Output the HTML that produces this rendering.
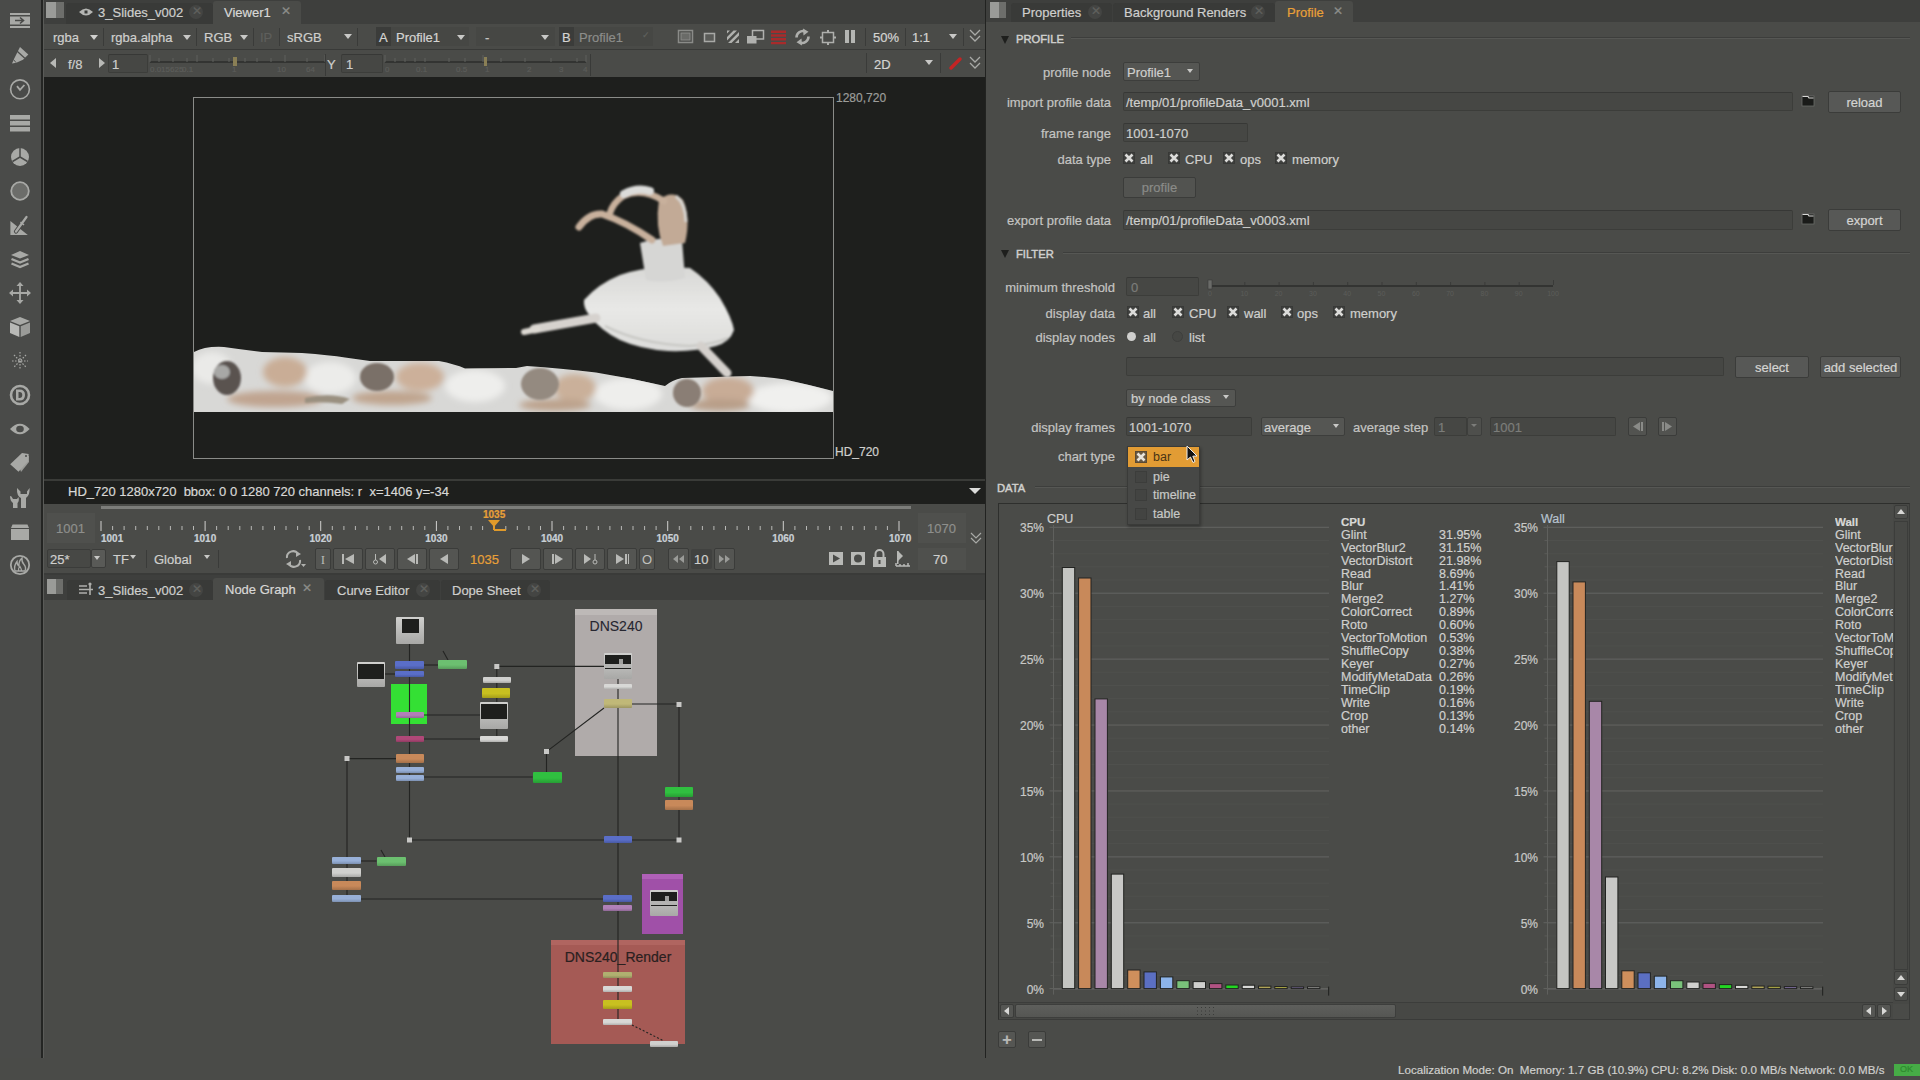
<!DOCTYPE html>
<html><head><meta charset="utf-8">
<style>
*{box-sizing:border-box;margin:0;padding:0}
html,body{width:1920px;height:1080px;overflow:hidden;background:#4a4b48;font-family:"Liberation Sans",sans-serif;font-size:13px;color:#c8c8c6}
.a{position:absolute}
.tx{position:absolute;white-space:pre;line-height:1;-webkit-text-stroke:0.2px currentColor}
.sep{position:absolute;width:1px;background:#3a3b39}
.fld{position:absolute;background:#464744;border:1px solid #3c3d3a;border-top-color:#373836;border-radius:2px}
.btn{position:absolute;background:#575856;border:1px solid #3b3c3a;border-radius:2px}
.dd{position:absolute;background:#555653;border:1px solid #3d3e3c;border-radius:2px}
.arr{position:absolute;width:0;height:0;border-left:4px solid transparent;border-right:4px solid transparent;border-top:5px solid #c8c8c6}
.cb{position:absolute;width:12px;height:12px;background:#3f403e;border:1px solid #383937}
.nd{position:absolute;border-radius:1px}
</style></head><body>

<!-- LEFT TOOLBAR -->
<div class="a" style="left:0;top:0;width:41px;height:1058px;background:#4a4b49"></div>
<div class="a" style="left:41px;top:0;width:2px;height:1058px;background:#242523"></div>
<svg class="a" style="left:0;top:0" width="41" height="600" viewBox="0 0 41 600">
 <g fill="#a8a9a6">
  <!-- 1 box arrow -->
  <rect x="10" y="13" width="20" height="2"/><rect x="10" y="26" width="20" height="2"/>
  <rect x="10" y="16.5" width="20" height="8"/>
  <path d="M15 20.5h8 M20 17.5l3.5 3-3.5 3" stroke="#4a4b49" stroke-width="1.6" fill="none"/>
  <!-- 2 pencil -->
  <path d="M14 59 L20 47 L28.3 54.6 L23 59.8 L16.3 62.8 L12 63.5Z"/>
  <path d="M17.2 51.2 L24.8 58.2" stroke="#4a4b49" stroke-width="1.2"/>
  <path d="M13.5 59.5 L16 62.6" stroke="#4a4b49" stroke-width="0.9"/>
  <!-- 3 clock -->
  <circle cx="20" cy="89.3" r="9.4" fill="none" stroke="#a8a9a6" stroke-width="1.6"/>
  <path d="M17 86.2 L20 89.8 L24.4 85" stroke="#a8a9a6" stroke-width="1.8" fill="none"/>
  <!-- 4 stacked bars -->
  <rect x="10" y="115" width="20" height="4.5"/><rect x="10" y="121" width="20" height="4.5"/><rect x="10" y="127" width="20" height="4.5"/>
  <!-- 5 pie -->
  <circle cx="20" cy="157" r="9"/>
  <path d="M20 157 V148 M20 157 L12.5 161.5 M20 157 L27.5 161.5" stroke="#4a4b49" stroke-width="1.5"/>
  <!-- 6 circle -->
  <circle cx="20" cy="191" r="8.8" fill="#6c6d6a" stroke="#a8a9a6" stroke-width="1.8"/>
  <!-- 7 triangle+pen -->
  <path d="M10.4 221 V235 H27.8Z"/>
  <path d="M16 231.5 L26.5 217" stroke="#4a4b49" stroke-width="4.2" stroke-linecap="round"/>
  <path d="M16 231.5 L26.5 217" stroke="#a8a9a6" stroke-width="2.2" stroke-linecap="round"/>
  <path d="M20.5 222 L24 225" stroke="#a8a9a6" stroke-width="1.6"/>
  <!-- 8 layers -->
  <path d="M11 255 L20 251 L29 255 L20 258.5Z"/>
  <path d="M11.5 259 L20 262.5 L28.5 259" stroke="#a8a9a6" stroke-width="2.4" fill="none"/>
  <path d="M11.5 263.5 L20 267 L28.5 263.5" stroke="#a8a9a6" stroke-width="2.4" fill="none"/>
  <!-- 9 move -->
  <path d="M20 283 V303 M10 293 H30" stroke="#a8a9a6" stroke-width="1.8"/>
  <path d="M20 282 L16.5 286 H23.5Z M20 304 L16.5 300 H23.5Z M9 293 L13 289.5 V296.5Z M31 293 L27 289.5 V296.5Z"/>
  <!-- 10 cube -->
  <path d="M10 321 L20 317 L30 321 L20 325Z"/><path d="M10 322.5 L19.3 326.3 V337 L10 333Z" fill="#b8b9b6"/><path d="M20.7 326.3 L30 322.5 V333 L20.7 337Z" fill="#9a9b98"/>
  <!-- 11 particles -->
  <path d="M20 352 V370 M12 361 H28 M14 355 L26 367 M26 355 L14 367" stroke="#a8a9a6" stroke-width="1.2" stroke-dasharray="1.6 1.4"/>
  <!-- 12 D circle -->
  <circle cx="20" cy="395" r="9" fill="none" stroke="#a8a9a6" stroke-width="2.6"/>
  <path d="M16 389.5 H19.5 Q25 389.5 25 395 Q25 400.5 19.5 400.5 H16Z M18.5 392 V398 H19.5 Q22.3 398 22.3 395 Q22.3 392 19.5 392Z" fill="#a8a9a6" fill-rule="evenodd"/>
  <!-- 13 eye -->
  <path d="M10 429 Q20 418.5 29.6 429 Q20 439.5 10 429Z"/><ellipse cx="20" cy="429" rx="3.8" ry="3.2" fill="#4a4b49"/>
  <!-- 14 tags -->
  <path d="M21 472 L29 462 V456 L27 455 L19 466Z" fill="#9a9b98"/>
  <path d="M10.2 464.3 L22 453 L28.7 454 L27.8 461.5 L18.5 471.7Z"/><circle cx="26" cy="456" r="1" fill="#4a4b49"/>
  <!-- 15 wrenches -->
  <path d="M10 496 Q10 501 13 503 V508 H17.5 V503 Q19.5 501 18.5 497 L17 499 H13 L11.5 496.5Z"/>
  <path d="M17 488 Q16.5 496 21 498 V508 H26 V498 Q30 495.5 29.6 488 L27 491.5 V494 H20.5 V491.5Z"/>
  <!-- 16 drawer -->
  <path d="M12.5 524.5 H27.5 L29 528 H11Z"/><rect x="11" y="529" width="18" height="11"/>
  <!-- 17 fire circle -->
  <circle cx="20" cy="565" r="9.2" fill="none" stroke="#a8a9a6" stroke-width="1.8"/>
  <path d="M15 571 Q13.5 566 17 561.5 Q17 565 19 566 Q18.5 561 22 558 Q21.5 562 24 564.5 Q26.5 567.5 25 571Z" fill="none" stroke="#a8a9a6" stroke-width="1.4"/>
  <path d="M18.5 571 Q18 568 20 566.5 Q21.5 569 21.5 571" fill="none" stroke="#a8a9a6" stroke-width="1.2"/>
 </g>
</svg>

<div class="a" style="left:43px;top:0;width:1px;height:1058px;background:#5a5b58"></div>

<!-- VIEWER PANE -->
<!-- VIEWER TAB BAR -->
<div class="a" style="left:44px;top:0;width:941px;height:24px;background:#3e3f3d"></div>
<div class="a" style="left:46px;top:2px;width:18px;height:16px;background:linear-gradient(90deg,#9a9b98 0 55%,#6d6e6b 55% 100%)"></div>
<div class="a" style="left:66px;top:3px;width:147px;height:21px;background:#393a38;border-radius:3px 3px 0 0"></div>
<svg class="a" style="left:78px;top:6px" width="16" height="12" viewBox="0 0 16 12"><path d="M1 6 Q8 -1 15 6 Q8 13 1 6Z" fill="#b5b6b3"/><rect x="6.5" y="4.5" width="3" height="3" fill="#393a38"/></svg>
<div class="tx" style="left:98px;top:6px;font-size:13px;color:#cfcfcd">3_Slides_v002</div>
<div class="a" style="left:189px;top:5px;width:14px;height:14px;border-radius:7px;background:#444543"></div>
<div class="tx" style="left:192px;top:5px;font-size:12px;color:#5f605d">✕</div>
<div class="a" style="left:213px;top:1px;width:88px;height:23px;background:#4a4b48;border-radius:3px 3px 0 0"></div>
<div class="tx" style="left:224px;top:6px;font-size:13px;color:#d8d8d6">Viewer1</div>
<div class="tx" style="left:281px;top:5px;font-size:12px;color:#8c8d8a">✕</div>

<!-- VIEWER ROW 1 -->
<div class="a" style="left:44px;top:24px;width:941px;height:26px;background:#4a4b48"></div>
<div class="a" style="left:44px;top:49px;width:941px;height:1px;background:#393a38"></div>
<div class="tx" style="left:53px;top:31px;color:#cfcfcd">rgba</div><div class="arr" style="left:90px;top:35px;border-top-color:#d0d0ce"></div>
<div class="sep" style="left:103px;top:28px;height:18px"></div>
<div class="tx" style="left:111px;top:31px;color:#cfcfcd">rgba.alpha</div><div class="arr" style="left:183px;top:35px"></div>
<div class="sep" style="left:196px;top:28px;height:18px"></div>
<div class="tx" style="left:204px;top:31px;color:#cfcfcd">RGB</div><div class="arr" style="left:240px;top:35px"></div>
<div class="sep" style="left:253px;top:28px;height:18px"></div>
<div class="tx" style="left:260px;top:31px;color:#5e5f5c">IP</div>
<div class="sep" style="left:279px;top:28px;height:18px"></div>
<div class="tx" style="left:287px;top:31px;color:#cfcfcd">sRGB</div><div class="arr" style="left:344px;top:34px"></div>
<div class="sep" style="left:357px;top:28px;height:18px"></div>
<div class="a" style="left:376px;top:27px;width:93px;height:19px;background:#464744"></div>
<div class="a" style="left:376px;top:27px;width:15px;height:19px;background:#3b3c3a"></div>
<div class="tx" style="left:379px;top:31px;color:#d4d4d2">A</div>
<div class="tx" style="left:396px;top:31px;color:#d4d4d2">Profile1</div><div class="arr" style="left:457px;top:35px"></div>
<div class="a" style="left:476px;top:27px;width:79px;height:19px;background:#464744"></div>
<div class="tx" style="left:485px;top:31px;color:#c8c8c6">-</div><div class="arr" style="left:541px;top:35px"></div>
<div class="a" style="left:559px;top:27px;width:94px;height:19px;background:#464744"></div>
<div class="a" style="left:559px;top:27px;width:15px;height:19px;background:#3b3c3a"></div>
<div class="tx" style="left:562px;top:31px;color:#d4d4d2">B</div>
<div class="tx" style="left:579px;top:31px;color:#8c8d8a">Profile1</div>
<div class="tx" style="left:642px;top:31px;font-size:9px;color:#5f605d">✓</div>
<!-- row1 icons -->
<svg class="a" style="left:676px;top:28px" width="190" height="18" viewBox="0 0 190 18">
 <rect x="2.5" y="2.5" width="14" height="12" fill="none" stroke="#8a8b88" stroke-width="1.5"/><rect x="5" y="5" width="9" height="7" fill="#6a6b68" stroke="#8a8b88" stroke-width="1"/>
 <rect x="28.5" y="5.5" width="10" height="8" fill="#5a5b58" stroke="#a8a9a6" stroke-width="1.5"/>
 <path d="M51 2.5 H54 L51 5.5Z M51 9 L57.5 2.5 H61 L51 12.5Z M52 15 L63 4 V7.5 L55.5 15Z M59 15 L63 11 V15Z" fill="#b0b1ae"/>
 <rect x="76.5" y="2.5" width="11" height="8.5" fill="none" stroke="#b0b1ae" stroke-width="1.5"/><rect x="71" y="8" width="9.5" height="7.5" fill="#b0b1ae"/>
 <path d="M95 2.5h15v2.4H95z M95 6.3h15v2.4H95z M95 10.1h15v2.4H95z M95 13.9h15v2.4H95z" fill="#a82b2b"/>
 <g transform="translate(-5 0)"><path d="M125.5 9.5 A6.5 6.5 0 0 1 134 3.3" stroke="#aeafac" stroke-width="2.6" fill="none"/><path d="M132 0.5 L137.5 3.8 L132.5 7.5Z" fill="#aeafac"/>
 <path d="M137.5 8.5 A6.5 6.5 0 0 1 129 14.7" stroke="#aeafac" stroke-width="2.6" fill="none"/><path d="M131 17.5 L125.5 14.2 L130.5 10.5Z" fill="#aeafac"/></g>
 <rect x="146.5" y="4.5" width="11" height="10" fill="none" stroke="#aeafac" stroke-width="1.5"/><rect x="151" y="2" width="2" height="2" fill="#aeafac"/><rect x="151" y="15" width="2" height="2" fill="#aeafac"/><rect x="144" y="8.5" width="2" height="2" fill="#aeafac"/><rect x="158" y="8.5" width="2" height="2" fill="#aeafac"/>
 <rect x="169" y="2" width="4" height="13" fill="#b5b6b3"/><rect x="175" y="2" width="4" height="13" fill="#b5b6b3"/>
</svg>
<div class="sep" style="left:865px;top:28px;height:18px"></div>
<div class="tx" style="left:873px;top:31px;color:#d4d4d2">50%</div>
<div class="sep" style="left:905px;top:28px;height:18px"></div>
<div class="tx" style="left:912px;top:31px;color:#d4d4d2">1:1</div><div class="arr" style="left:949px;top:34px"></div>
<div class="sep" style="left:963px;top:28px;height:18px"></div>
<svg class="a" style="left:969px;top:29px" width="12" height="14" viewBox="0 0 12 14"><path d="M1 1 L6 6 L11 1 M1 7 L6 12 L11 7" stroke="#a9aaa7" stroke-width="1.3" fill="none"/></svg>

<!-- VIEWER ROW 2 -->
<div class="a" style="left:44px;top:50px;width:941px;height:27px;background:#4a4b48"></div>
<div class="a" style="left:50px;top:58px;width:0;height:0;border-top:5px solid transparent;border-bottom:5px solid transparent;border-right:6px solid #b8b9b6"></div>
<div class="tx" style="left:68px;top:58px;color:#cfcfcd">f/8</div>
<div class="a" style="left:99px;top:58px;width:0;height:0;border-top:5px solid transparent;border-bottom:5px solid transparent;border-left:6px solid #b8b9b6"></div>
<div class="fld" style="left:108px;top:54px;width:40px;height:19px;background:#464744"></div>
<div class="tx" style="left:112px;top:58px;color:#cfcfcd">1</div>
<svg class="a" style="left:149px;top:51px" width="445" height="26" viewBox="0 0 445 26">
 <rect x="1" y="10" width="176" height="2" fill="#333432"/>
 <path d="M1 4v7 M10 7v4 M24 7v4 M38 7v4 M48 4v7 M64 7v4 M80 7v4 M96 7v4 M108 7v4 M122 7v4 M136 4v7 M158 7v4 M176 4v7" stroke="#5f605d" stroke-width="1"/>
 <rect x="84" y="6" width="4" height="9" fill="#8a7f55"/>
 <rect x="176" y="3" width="1" height="22" fill="#393a38"/>
 <rect x="236" y="10" width="201" height="2" fill="#333432"/>
 <path d="M236 4v7 M246 7v4 M256 7v4 M266 7v4 M276 7v4 M300 7v4 M316 7v4 M334 4v7 M352 7v4 M376 7v4 M402 7v4 M428 7v4 M437 4v7" stroke="#5f605d" stroke-width="1"/>
 <rect x="335" y="6" width="3" height="9" fill="#8a7f55"/>
 <rect x="441" y="3" width="1" height="22" fill="#393a38"/>
</svg>
<div class="tx" style="left:150px;top:66px;font-size:8px;color:#5c5d5a">0.015625</div><div class="tx" style="left:182px;top:66px;font-size:8px;color:#5c5d5a">0.1</div><div class="tx" style="left:232px;top:66px;font-size:8px;color:#5c5d5a">1</div><div class="tx" style="left:277px;top:66px;font-size:8px;color:#5c5d5a">10</div><div class="tx" style="left:306px;top:66px;font-size:8px;color:#5c5d5a">64</div><div class="tx" style="left:385px;top:66px;font-size:8px;color:#5c5d5a">0</div><div class="tx" style="left:416px;top:66px;font-size:8px;color:#5c5d5a">0.1</div><div class="tx" style="left:456px;top:66px;font-size:8px;color:#5c5d5a">0.5</div><div class="tx" style="left:485px;top:66px;font-size:8px;color:#5c5d5a">1</div><div class="tx" style="left:527px;top:66px;font-size:8px;color:#5c5d5a">2</div><div class="tx" style="left:559px;top:66px;font-size:8px;color:#5c5d5a">3</div><div class="tx" style="left:583px;top:66px;font-size:8px;color:#5c5d5a">4</div><div class="tx" style="left:327px;top:58px;color:#cfcfcd">Y</div>
<div class="fld" style="left:341px;top:54px;width:42px;height:19px;background:#464744"></div>
<div class="tx" style="left:346px;top:58px;color:#cfcfcd">1</div>
<div class="sep" style="left:866px;top:53px;height:20px"></div>
<div class="tx" style="left:874px;top:58px;color:#d4d4d2">2D</div><div class="arr" style="left:925px;top:60px"></div>
<div class="sep" style="left:940px;top:53px;height:20px"></div>
<svg class="a" style="left:948px;top:55px" width="16" height="16" viewBox="0 0 16 16"><path d="M3 13 L12 4" stroke="#c42424" stroke-width="3.5" stroke-linecap="round"/></svg>
<svg class="a" style="left:969px;top:56px" width="12" height="14" viewBox="0 0 12 14"><path d="M1 1 L6 6 L11 1 M1 7 L6 12 L11 7" stroke="#a9aaa7" stroke-width="1.3" fill="none"/></svg>

<!-- VIEWER IMAGE AREA -->
<div class="a" style="left:44px;top:77px;width:941px;height:403px;background:#1e1f1d"></div>
<div class="a" style="left:193px;top:97px;width:641px;height:362px;border:1px solid #8a8b88"></div>
<div class="tx" style="left:836px;top:92px;font-size:12px;color:#9c9d9a">1280,720</div>
<div class="tx" style="left:835px;top:446px;font-size:12px;color:#d0d0ce">HD_720</div>
<!-- IMAGE -->
<svg class="a" style="left:194px;top:98px" width="639" height="360" viewBox="194 98 639 360">
 <defs>
  <filter id="bl" x="-5%" y="-5%" width="110%" height="110%"><feGaussianBlur stdDeviation="0.9"/></filter>
  <filter id="bl2" x="-10%" y="-10%" width="120%" height="120%"><feGaussianBlur stdDeviation="3"/></filter>
  <clipPath id="fr"><path d="M194 352 Q205 346 224 347 Q245 350 262 352 L302 353 Q330 355 345 357.5 L370 361 L439 361 Q455 364 465 368.5 L516 368 L527 366 Q560 368 596 372.5 Q630 378 665 386 Q672 380 682 378 L750 376 Q770 377 785 379.5 Q810 385 833 391 V412 H194Z"/></clipPath>
  <linearGradient id="tut" x1="0" y1="0" x2="0" y2="1"><stop offset="0" stop-color="#d8d8d6"/><stop offset="0.5" stop-color="#e8e8e6"/><stop offset="1" stop-color="#dcdcda"/></linearGradient>
 </defs>
 <g clip-path="url(#fr)">
  <rect x="194" y="340" width="639" height="72" fill="#d8d8d6"/>
  <g filter="url(#bl2)">
   <ellipse cx="212" cy="368" rx="20" ry="16" fill="#eaeae8"/>
   <ellipse cx="330" cy="378" rx="26" ry="16" fill="#ececea"/>
   <ellipse cx="475" cy="386" rx="30" ry="16" fill="#eeeeec"/>
   <ellipse cx="628" cy="394" rx="34" ry="16" fill="#eeeeec"/>
   <ellipse cx="790" cy="398" rx="42" ry="15" fill="#f0f0ee"/>
   <ellipse cx="285" cy="372" rx="22" ry="15" fill="#c9ad96"/>
   <ellipse cx="275" cy="399" rx="48" ry="8" fill="#c0a490"/>
   <ellipse cx="420" cy="377" rx="24" ry="14" fill="#ccb09a"/>
   <ellipse cx="392" cy="398" rx="40" ry="7" fill="#bfa48e"/>
   <ellipse cx="575" cy="388" rx="21" ry="14" fill="#cab09a"/>
   <ellipse cx="555" cy="405" rx="36" ry="6" fill="#bca28c"/>
   <ellipse cx="728" cy="391" rx="26" ry="14" fill="#c8ac96"/>
   <ellipse cx="720" cy="405" rx="30" ry="6" fill="#b89e88"/>
  </g>
  <g filter="url(#bl)">
   <ellipse cx="227" cy="378" rx="14" ry="17" fill="#5a5250"/>
   <ellipse cx="222" cy="372" rx="8" ry="7" fill="#a8a8a6"/>
   <ellipse cx="377" cy="377" rx="17" ry="14" fill="#7a7068"/>
   <ellipse cx="540" cy="384" rx="19" ry="16" fill="#948a80"/>
   <ellipse cx="687" cy="393" rx="14" ry="14" fill="#8a7e74"/>
   <path d="M305 398 Q330 392 350 399 L342 404 Q322 401 305 403Z" fill="#9a9080"/>
  </g>
 </g>
 <!-- main dancer -->
 <g filter="url(#bl)">
  <path d="M584 300 Q598 284 620 275 Q640 268 665 267 L690 268 Q708 280 720 298 Q732 318 734 330 Q730 342 716 346 Q695 352 668 351 Q640 349 620 340 Q600 330 590 316 Q583 308 584 300Z" fill="url(#tut)"/>
  <path d="M605 326 Q640 344 690 346 Q715 344 728 338" stroke="#c6c6c2" stroke-width="2" fill="none"/>
  <path d="M640 243 Q662 236 682 240 L685 278 Q664 284 646 280Z" fill="#d6d6d4"/>
  <path d="M596 318 L534 329" stroke="#d6d2ce" stroke-width="9" stroke-linecap="round"/>
  <path d="M538 329 L524 332" stroke="#dcd8d2" stroke-width="6" stroke-linecap="round"/>
  <path d="M701 346 L727 373" stroke="#d4d0cc" stroke-width="9" stroke-linecap="round"/>
  <path d="M659 200 Q672 189 683 200 Q691 218 685 243 L663 246 Q655 226 659 200Z" fill="#c2aa96"/>
  <path d="M676 196 Q686 204 686 222" stroke="#d6d4d0" stroke-width="3" fill="none"/>
  <path d="M652 240 Q626 222 602 214 Q589 213 579 227" stroke="#c8b09c" stroke-width="7" fill="none" stroke-linecap="round"/>
  <path d="M664 201 Q642 187 623 196 Q613 203 610 213" stroke="#c8b09c" stroke-width="6.5" fill="none" stroke-linecap="round"/>
  <path d="M624 194 Q637 187 650 191" stroke="#dcdcda" stroke-width="8" fill="none" stroke-linecap="round"/>
 </g>
</svg>

<!-- INFO BAR -->
<div class="a" style="left:44px;top:479px;width:941px;height:2px;background:#3a3b38"></div>
<div class="a" style="left:44px;top:481px;width:941px;height:23px;background:#1e1f1d"></div>
<div class="tx" style="left:68px;top:485px;font-size:13px;color:#d8d8d6">HD_720 1280x720  bbox: 0 0 1280 720 channels: r  x=1406 y=-34</div>
<div class="a" style="left:969px;top:488px;width:0;height:0;border-left:6px solid transparent;border-right:6px solid transparent;border-top:6px solid #dcdcda"></div>




<!-- TIMELINE -->
<div class="a" style="left:44px;top:505px;width:941px;height:68px;background:#4a4b48"></div>
<div class="a" style="left:101px;top:506px;width:810px;height:3px;background:#7c7d7a"></div>
<div class="a" style="left:47px;top:513px;width:48px;height:30px;background:#4f504d"></div>
<div class="tx" style="left:56px;top:522px;font-size:13px;color:#8e8f8c">1001</div>
<div class="a" style="left:918px;top:513px;width:48px;height:30px;background:#4f504d"></div>
<div class="tx" style="left:927px;top:522px;font-size:13px;color:#8e8f8c">1070</div>
<svg class="a" style="left:0;top:0;pointer-events:none" width="985" height="545" viewBox="0 0 985 545"><rect x="100.5" y="521" width="1" height="10" fill="#d0d0ce"/><rect x="112.1" y="526" width="1" height="4" fill="#b8b9b6"/><rect x="123.6" y="526" width="1" height="4" fill="#b8b9b6"/><rect x="135.2" y="526" width="1" height="4" fill="#b8b9b6"/><rect x="146.8" y="526" width="1" height="4" fill="#b8b9b6"/><rect x="158.3" y="526" width="1" height="4" fill="#b8b9b6"/><rect x="169.9" y="526" width="1" height="4" fill="#b8b9b6"/><rect x="181.5" y="526" width="1" height="4" fill="#b8b9b6"/><rect x="193.0" y="526" width="1" height="4" fill="#b8b9b6"/><rect x="204.6" y="521" width="1" height="10" fill="#d0d0ce"/><rect x="216.1" y="526" width="1" height="4" fill="#b8b9b6"/><rect x="227.7" y="526" width="1" height="4" fill="#b8b9b6"/><rect x="239.3" y="526" width="1" height="4" fill="#b8b9b6"/><rect x="250.8" y="526" width="1" height="4" fill="#b8b9b6"/><rect x="262.4" y="526" width="1" height="4" fill="#b8b9b6"/><rect x="274.0" y="526" width="1" height="4" fill="#b8b9b6"/><rect x="285.5" y="526" width="1" height="4" fill="#b8b9b6"/><rect x="297.1" y="526" width="1" height="4" fill="#b8b9b6"/><rect x="308.7" y="526" width="1" height="4" fill="#b8b9b6"/><rect x="320.2" y="521" width="1" height="10" fill="#d0d0ce"/><rect x="331.8" y="526" width="1" height="4" fill="#b8b9b6"/><rect x="343.4" y="526" width="1" height="4" fill="#b8b9b6"/><rect x="354.9" y="526" width="1" height="4" fill="#b8b9b6"/><rect x="366.5" y="526" width="1" height="4" fill="#b8b9b6"/><rect x="378.1" y="526" width="1" height="4" fill="#b8b9b6"/><rect x="389.6" y="526" width="1" height="4" fill="#b8b9b6"/><rect x="401.2" y="526" width="1" height="4" fill="#b8b9b6"/><rect x="412.8" y="526" width="1" height="4" fill="#b8b9b6"/><rect x="424.3" y="526" width="1" height="4" fill="#b8b9b6"/><rect x="435.9" y="521" width="1" height="10" fill="#d0d0ce"/><rect x="447.4" y="526" width="1" height="4" fill="#b8b9b6"/><rect x="459.0" y="526" width="1" height="4" fill="#b8b9b6"/><rect x="470.6" y="526" width="1" height="4" fill="#b8b9b6"/><rect x="482.1" y="526" width="1" height="4" fill="#b8b9b6"/><rect x="493.7" y="526" width="1" height="4" fill="#b8b9b6"/><rect x="505.3" y="526" width="1" height="4" fill="#b8b9b6"/><rect x="516.8" y="526" width="1" height="4" fill="#b8b9b6"/><rect x="528.4" y="526" width="1" height="4" fill="#b8b9b6"/><rect x="540.0" y="526" width="1" height="4" fill="#b8b9b6"/><rect x="551.5" y="521" width="1" height="10" fill="#d0d0ce"/><rect x="563.1" y="526" width="1" height="4" fill="#b8b9b6"/><rect x="574.7" y="526" width="1" height="4" fill="#b8b9b6"/><rect x="586.2" y="526" width="1" height="4" fill="#b8b9b6"/><rect x="597.8" y="526" width="1" height="4" fill="#b8b9b6"/><rect x="609.4" y="526" width="1" height="4" fill="#b8b9b6"/><rect x="620.9" y="526" width="1" height="4" fill="#b8b9b6"/><rect x="632.5" y="526" width="1" height="4" fill="#b8b9b6"/><rect x="644.1" y="526" width="1" height="4" fill="#b8b9b6"/><rect x="655.6" y="526" width="1" height="4" fill="#b8b9b6"/><rect x="667.2" y="521" width="1" height="10" fill="#d0d0ce"/><rect x="678.8" y="526" width="1" height="4" fill="#b8b9b6"/><rect x="690.3" y="526" width="1" height="4" fill="#b8b9b6"/><rect x="701.9" y="526" width="1" height="4" fill="#b8b9b6"/><rect x="713.4" y="526" width="1" height="4" fill="#b8b9b6"/><rect x="725.0" y="526" width="1" height="4" fill="#b8b9b6"/><rect x="736.6" y="526" width="1" height="4" fill="#b8b9b6"/><rect x="748.1" y="526" width="1" height="4" fill="#b8b9b6"/><rect x="759.7" y="526" width="1" height="4" fill="#b8b9b6"/><rect x="771.3" y="526" width="1" height="4" fill="#b8b9b6"/><rect x="782.8" y="521" width="1" height="10" fill="#d0d0ce"/><rect x="794.4" y="526" width="1" height="4" fill="#b8b9b6"/><rect x="806.0" y="526" width="1" height="4" fill="#b8b9b6"/><rect x="817.5" y="526" width="1" height="4" fill="#b8b9b6"/><rect x="829.1" y="526" width="1" height="4" fill="#b8b9b6"/><rect x="840.7" y="526" width="1" height="4" fill="#b8b9b6"/><rect x="852.2" y="526" width="1" height="4" fill="#b8b9b6"/><rect x="863.8" y="526" width="1" height="4" fill="#b8b9b6"/><rect x="875.4" y="526" width="1" height="4" fill="#b8b9b6"/><rect x="886.9" y="526" width="1" height="4" fill="#b8b9b6"/><rect x="898.5" y="521" width="1" height="10" fill="#d0d0ce"/>
 <path d="M488 520 H500 L494 527Z" fill="#e09a2a"/><rect x="493" y="520" width="2" height="10" fill="#e09a2a"/><rect x="494" y="529" width="12" height="2" fill="#e09a2a"/>
 <path d="M971 533 L976 538 L981 533 M971 538 L976 543 L981 538" stroke="#a9aaa7" stroke-width="1.2" fill="none"/>
</svg>

<div class="tx" style="left:101px;top:534px;font-size:10px;font-weight:bold;color:#c9d0d6">1001</div><div class="tx" style="left:155.1px;width:100px;text-align:center;top:534px;font-size:10px;font-weight:bold;color:#c9d0d6">1010</div><div class="tx" style="left:270.7px;width:100px;text-align:center;top:534px;font-size:10px;font-weight:bold;color:#c9d0d6">1020</div><div class="tx" style="left:386.4px;width:100px;text-align:center;top:534px;font-size:10px;font-weight:bold;color:#c9d0d6">1030</div><div class="tx" style="left:502.0px;width:100px;text-align:center;top:534px;font-size:10px;font-weight:bold;color:#c9d0d6">1040</div><div class="tx" style="left:617.7px;width:100px;text-align:center;top:534px;font-size:10px;font-weight:bold;color:#c9d0d6">1050</div><div class="tx" style="left:733.3px;width:100px;text-align:center;top:534px;font-size:10px;font-weight:bold;color:#c9d0d6">1060</div><div class="tx" style="left:889px;top:534px;font-size:10px;font-weight:bold;color:#c9d0d6">1070</div><div class="tx" style="left:483px;top:510px;font-size:10px;font-weight:bold;color:#e8a038">1035</div>

<!-- TRANSPORT -->
<div class="a" style="left:47px;top:549px;width:44px;height:19px;background:#474845;border:1px solid #3b3c3a;border-radius:2px"></div>
<div class="tx" style="left:50px;top:553px;font-size:13px;color:#cfcfcd">25*</div>
<div class="a" style="left:91px;top:549px;width:15px;height:19px;background:#595a57;border:1px solid #3b3c3a;border-radius:2px"></div>
<div class="arr" style="left:94px;top:556px;border-left-width:3.5px;border-right-width:3.5px;border-top-width:4px"></div>
<div class="tx" style="left:113px;top:553px;color:#cfcfcd">TF</div><div class="arr" style="left:130px;top:555px;border-left-width:3.5px;border-right-width:3.5px;border-top-width:4px"></div>
<div class="sep" style="left:146px;top:550px;height:18px"></div>
<div class="tx" style="left:154px;top:553px;color:#cfcfcd">Global</div><div class="arr" style="left:204px;top:555px;border-left-width:3.5px;border-right-width:3.5px;border-top-width:4px"></div>
<div class="sep" style="left:218px;top:550px;height:18px"></div>
<svg class="a" style="left:284px;top:549px" width="24" height="20" viewBox="0 0 24 20"><path d="M3 9 A6 6 0 0 1 14 5 M16 11 A6 6 0 0 1 5 15" stroke="#b0b1ae" stroke-width="2" fill="none"/><path d="M12 2 L17 5 L12 8Z M7 12 L2 15 L7 18Z" fill="#b0b1ae"/><path d="M17 15 H22 L19.5 18Z" fill="#b0b1ae"/></svg>
<div class="btn" style="left:315px;top:548px;width:16px;height:22px;background:#545552"></div><svg class="a" style="left:315px;top:548px" width="16" height="22" viewBox="0 0 16 22"><text x="8" y="16" font-size="13" text-anchor="middle" fill="#b8b9b6" font-family="Liberation Serif">I</text></svg>
<div class="btn" style="left:333px;top:548px;width:30px;height:22px;background:#545552"></div><svg class="a" style="left:333px;top:548px" width="30" height="22" viewBox="0 0 30 22"><rect x="9" y="6" width="2" height="10" fill="#b8b9b6"/><path d="M21 6 V16 L12 11Z" fill="#b8b9b6"/></svg>
<div class="btn" style="left:365px;top:548px;width:30px;height:22px;background:#545552"></div><svg class="a" style="left:365px;top:548px" width="30" height="22" viewBox="0 0 30 22"><path d="M21 6 V16 L14 11Z" fill="#b8b9b6"/><circle cx="10.5" cy="14" r="2" fill="none" stroke="#b8b9b6" stroke-width="1"/><rect x="10" y="6" width="1" height="6" fill="#b8b9b6"/></svg>
<div class="btn" style="left:397px;top:548px;width:30px;height:22px;background:#545552"></div><svg class="a" style="left:397px;top:548px" width="30" height="22" viewBox="0 0 30 22"><path d="M18 6 V16 L10 11Z" fill="#b8b9b6"/><rect x="19" y="6" width="2" height="10" fill="#b8b9b6"/></svg>
<div class="btn" style="left:429px;top:548px;width:30px;height:22px;background:#545552"></div><svg class="a" style="left:429px;top:548px" width="30" height="22" viewBox="0 0 30 22"><path d="M19 6 V16 L11 11Z" fill="#b8b9b6"/></svg>
<div class="btn" style="left:510px;top:548px;width:31px;height:22px;background:#545552"></div><svg class="a" style="left:510px;top:548px" width="31" height="22" viewBox="0 0 31 22"><path d="M12 6 V16 L20 11Z" fill="#b8b9b6"/></svg>
<div class="btn" style="left:543px;top:548px;width:30px;height:22px;background:#545552"></div><svg class="a" style="left:543px;top:548px" width="30" height="22" viewBox="0 0 30 22"><rect x="9" y="6" width="2" height="10" fill="#b8b9b6"/><path d="M12 6 V16 L20 11Z" fill="#b8b9b6"/></svg>
<div class="btn" style="left:575px;top:548px;width:30px;height:22px;background:#545552"></div><svg class="a" style="left:575px;top:548px" width="30" height="22" viewBox="0 0 30 22"><path d="M9 6 V16 L16 11Z" fill="#b8b9b6"/><circle cx="20" cy="14" r="2" fill="none" stroke="#b8b9b6" stroke-width="1"/><rect x="19.5" y="6" width="1" height="6" fill="#b8b9b6"/></svg>
<div class="btn" style="left:607px;top:548px;width:30px;height:22px;background:#545552"></div><svg class="a" style="left:607px;top:548px" width="30" height="22" viewBox="0 0 30 22"><path d="M9 6 V16 L17 11Z" fill="#b8b9b6"/><rect x="18" y="6" width="2" height="10" fill="#b8b9b6"/><rect x="21" y="6" width="1" height="10" fill="#b8b9b6"/></svg>
<div class="btn" style="left:639px;top:548px;width:16px;height:22px;background:#545552"></div><svg class="a" style="left:639px;top:548px" width="16" height="22" viewBox="0 0 16 22"><text x="8" y="16" font-size="13" text-anchor="middle" fill="#c0c1be" font-family="Liberation Sans">O</text></svg>
<div class="btn" style="left:668px;top:548px;width:21px;height:22px;background:#545552"></div><svg class="a" style="left:668px;top:548px" width="21" height="22" viewBox="0 0 21 22"><path d="M10 7 V15 L5 11Z M16 7 V15 L11 11Z" fill="#9a9b98"/></svg>
<div class="btn" style="left:714px;top:548px;width:21px;height:22px;background:#545552"></div><svg class="a" style="left:714px;top:548px" width="21" height="22" viewBox="0 0 21 22"><path d="M5 7 V15 L10 11Z M11 7 V15 L16 11Z" fill="#9a9b98"/></svg>

<div class="tx" style="left:470px;top:553px;font-size:13px;color:#e8a038">1035</div>
<div class="a" style="left:691px;top:549px;width:21px;height:20px;background:#414240;border-radius:2px"></div>
<div class="tx" style="left:694px;top:553px;font-size:13px;color:#cfcfcd">10</div>
<svg class="a" style="left:826px;top:549px" width="90" height="22" viewBox="0 0 90 22">
 <rect x="3" y="3" width="14" height="13" fill="#b8b9b6"/><path d="M7 5.5 V13.5 L14 9.5Z" fill="#4a4b48"/>
 <rect x="25" y="3" width="14" height="13" fill="#b8b9b6"/><circle cx="32" cy="9.5" r="4" fill="#4a4b48"/>
 <rect x="47" y="8" width="13" height="10" fill="#b8b9b6"/><path d="M49.5 8 V5 A4 4 0 0 1 57.5 5 V8" stroke="#b8b9b6" stroke-width="2" fill="none"/><rect x="52.5" y="11" width="2" height="4" fill="#4a4b48"/>
 <path d="M72 2 V12 L77 7Z" fill="#b8b9b6"/><rect x="71" y="2" width="1.5" height="13" fill="#b8b9b6"/><path d="M70 17 H84 M70 14 V17 M74 15 V17 M78 15 V17 M82 14 V17" stroke="#b8b9b6" stroke-width="1.5"/>
</svg>
<div class="a" style="left:918px;top:548px;width:48px;height:22px;background:#4f504d"></div>
<div class="tx" style="left:933px;top:553px;font-size:13px;color:#cfcfcd">70</div>

<!-- NODE GRAPH TABS -->
<div class="a" style="left:44px;top:573px;width:941px;height:2px;background:#3a3b39"></div>
<div class="a" style="left:44px;top:575px;width:941px;height:25px;background:#3e3f3d"></div>
<div class="a" style="left:47px;top:579px;width:16px;height:15px;background:linear-gradient(90deg,#9a9b98 0 55%,#6d6e6b 55% 100%)"></div>
<div class="a" style="left:67px;top:580px;width:146px;height:20px;background:#393a38;border-radius:3px 3px 0 0"></div>
<svg class="a" style="left:78px;top:582px" width="16" height="14" viewBox="0 0 16 14"><path d="M1 4h8 M1 7.5h8 M1 11h8 M12 1v12 M9 7.5h6" stroke="#aeafac" stroke-width="1.6"/><circle cx="12" cy="2" r="1.6" fill="#aeafac"/></svg>
<div class="tx" style="left:98px;top:584px;font-size:13px;color:#cfcfcd">3_Slides_v002</div>
<div class="a" style="left:189px;top:583px;width:14px;height:14px;border-radius:7px;background:#444543"></div>
<div class="tx" style="left:192px;top:583px;font-size:12px;color:#5f605d">✕</div>
<div class="a" style="left:213px;top:578px;width:111px;height:22px;background:#4a4b48;border-radius:3px 3px 0 0"></div>
<div class="tx" style="left:225px;top:583px;font-size:13px;color:#d8d8d6">Node Graph</div>
<div class="tx" style="left:302px;top:582px;font-size:12px;color:#8c8d8a">✕</div>
<div class="a" style="left:325px;top:580px;width:115px;height:20px;background:#393a38;border-radius:3px 3px 0 0"></div>
<div class="tx" style="left:337px;top:584px;font-size:13px;color:#cfcfcd">Curve Editor</div>
<div class="a" style="left:416px;top:583px;width:14px;height:14px;border-radius:7px;background:#444543"></div>
<div class="tx" style="left:419px;top:583px;font-size:12px;color:#5f605d">✕</div>
<div class="a" style="left:441px;top:580px;width:109px;height:20px;background:#393a38;border-radius:3px 3px 0 0"></div>
<div class="tx" style="left:452px;top:584px;font-size:13px;color:#cfcfcd">Dope Sheet</div>
<div class="a" style="left:527px;top:583px;width:14px;height:14px;border-radius:7px;background:#444543"></div>
<div class="tx" style="left:530px;top:583px;font-size:12px;color:#5f605d">✕</div>

<!-- NODE GRAPH PANE -->
<div class="a" style="left:44px;top:600px;width:941px;height:458px;background:#4a4b48"></div>


<!-- NODE GRAPH -->
<div class="a" style="left:575px;top:609px;width:82px;height:147px;background:#b0abaa"></div>
<div class="a" style="left:575px;top:609px;width:82px;height:6px;background:#bdb9b7"></div><div class="tx" style="left:575px;width:82px;text-align:center;top:619px;font-size:14px;color:#262630;-webkit-text-stroke:0.1px #262630">DNS240</div>
<div class="a" style="left:642px;top:874px;width:41px;height:60px;background:#a050a8"></div>
<div class="a" style="left:642px;top:874px;width:41px;height:5px;background:#b060b8"></div>
<div class="a" style="left:551px;top:940px;width:134px;height:104px;background:#a55a55"></div>
<div class="a" style="left:551px;top:940px;width:134px;height:5px;background:#b06560"></div>
<div class="tx" style="left:551px;width:134px;text-align:center;top:950px;font-size:14px;color:#2a2020">DNS240_Render</div>
<!-- green backdrop -->
<div class="a" style="left:391px;top:684px;width:36px;height:40px;background:#34e034"></div>
<svg class="a" style="left:44px;top:600px" width="941" height="458" viewBox="44 600 941 458">
 <g stroke="#232422" stroke-width="1.1" fill="none">
  <path d="M409.5 643 V840"/>
  <path d="M347 758.6 V899 M347 758.6 H396"/>
  <path d="M618 679 V1025"/>
  <path d="M679 704.6 V840 M632 704 H679"/>
  <path d="M409.5 840 H679"/>
  <path d="M496.8 666.4 V742 M496.8 666.4 H604"/>
  <path d="M385 674 H396"/>
  <path d="M424 665 H438"/>
  <path d="M443 651 L448 660"/>
  <path d="M424 715 H480"/>
  <path d="M424 739 H482"/>
  <path d="M546.5 751.6 V772.5 M546.5 751.6 L604 708"/>
  <path d="M424 777 H532.6"/>
  <path d="M361 899 H603"/>
  <path d="M361 861 H376.5"/>
  <path d="M381 850 L385 857"/>
  <path d="M632 1025 L664 1041" stroke-dasharray="2 2"/>
 </g>
 <g fill="#c8c8c6">
  <rect x="407" y="837.5" width="5" height="5"/><rect x="676.5" y="837.5" width="5" height="5"/>
  <rect x="344.5" y="756" width="5" height="5"/><rect x="676.5" y="702" width="5" height="5"/>
  <rect x="494.3" y="664" width="5" height="5"/><rect x="544" y="749" width="5" height="5"/>
 </g>
</svg>
<!-- thumbnails -->
<div class="nd" style="left:396px;top:617px;width:28px;height:27px;background:linear-gradient(180deg,#d0d0ce,#a8a8a6)"></div>
<div class="a" style="left:402px;top:619px;width:17px;height:14px;background:#1e1f1d"></div>
<div class="nd" style="left:357px;top:662px;width:28px;height:25px;background:linear-gradient(180deg,#d0d0ce,#a8a8a6)"></div>
<div class="a" style="left:358px;top:664px;width:26px;height:15px;background:#1e1f1d"></div>
<div class="nd" style="left:480px;top:702px;width:28px;height:27px;background:linear-gradient(180deg,#d0d0ce,#a8a8a6)"></div>
<div class="a" style="left:481px;top:704px;width:26px;height:15px;background:#1e1f1d"></div>
<div class="nd" style="left:604px;top:653px;width:28px;height:26px;background:linear-gradient(180deg,#d0d0ce,#a8a8a6)"></div>
<div class="a" style="left:605px;top:655px;width:26px;height:14px;background:#1e1f1d"></div>
<div class="a" style="left:605px;top:664px;width:26px;height:4px;background:#b4b4b2"></div><div class="a" style="left:619px;top:659px;width:4px;height:5px;background:#a0a09e"></div>
<div class="nd" style="left:650px;top:890px;width:28px;height:26px;background:linear-gradient(180deg,#d0d0ce,#a8a8a6)"></div>
<div class="a" style="left:651px;top:892px;width:26px;height:14px;background:#1e1f1d"></div>
<div class="a" style="left:651px;top:901px;width:26px;height:4px;background:#b4b4b2"></div><div class="a" style="left:665px;top:896px;width:4px;height:5px;background:#a0a09e"></div>
<div class="nd" style="left:395px;top:661px;width:29px;height:8px;background:linear-gradient(180deg,#5a6ec8 0%,#5a6ec8 55%,#495aa4 100%)"></div>
<div class="nd" style="left:395px;top:671px;width:29px;height:6px;background:linear-gradient(180deg,#5a6ec8 0%,#5a6ec8 55%,#495aa4 100%)"></div>
<div class="nd" style="left:438px;top:660px;width:29px;height:9px;background:linear-gradient(180deg,#6cc070 0%,#6cc070 55%,#589d5b 100%)"></div>
<div class="nd" style="left:396px;top:712px;width:28px;height:6px;background:linear-gradient(180deg,#b080b8 0%,#b080b8 55%,#906896 100%)"></div>
<div class="nd" style="left:396px;top:736px;width:28px;height:6px;background:linear-gradient(180deg,#b04878 0%,#b04878 55%,#903b62 100%)"></div>
<div class="nd" style="left:396px;top:754px;width:28px;height:9px;background:linear-gradient(180deg,#c8895a 0%,#c8895a 55%,#a47049 100%)"></div>
<div class="nd" style="left:396px;top:767px;width:28px;height:6px;background:linear-gradient(180deg,#98b0d8 0%,#98b0d8 55%,#7c90b1 100%)"></div>
<div class="nd" style="left:396px;top:775px;width:28px;height:6px;background:linear-gradient(180deg,#98b0d8 0%,#98b0d8 55%,#7c90b1 100%)"></div>
<div class="nd" style="left:483px;top:677px;width:28px;height:6px;background:linear-gradient(180deg,#d0d0ce 0%,#d0d0ce 55%,#aaaaa8 100%)"></div>
<div class="nd" style="left:482px;top:688px;width:28px;height:10px;background:linear-gradient(180deg,#c8c020 0%,#c8c020 55%,#a49d1a 100%)"></div>
<div class="nd" style="left:480px;top:736px;width:28px;height:6px;background:linear-gradient(180deg,#d8d8d6 0%,#d8d8d6 55%,#b1b1af 100%)"></div>
<div class="nd" style="left:604px;top:684px;width:28px;height:5px;background:linear-gradient(180deg,#d8d8d6 0%,#d8d8d6 55%,#b1b1af 100%)"></div>
<div class="nd" style="left:604px;top:699px;width:28px;height:9px;background:linear-gradient(180deg,#c0b878 0%,#c0b878 55%,#9d9662 100%)"></div>
<div class="nd" style="left:533px;top:772px;width:29px;height:11px;background:linear-gradient(180deg,#30c040 0%,#30c040 55%,#279d34 100%)"></div>
<div class="nd" style="left:665px;top:787px;width:28px;height:10px;background:linear-gradient(180deg,#30c040 0%,#30c040 55%,#279d34 100%)"></div>
<div class="nd" style="left:665px;top:800px;width:28px;height:10px;background:linear-gradient(180deg,#c8895a 0%,#c8895a 55%,#a47049 100%)"></div>
<div class="nd" style="left:604px;top:836px;width:28px;height:7px;background:linear-gradient(180deg,#5a6ec8 0%,#5a6ec8 55%,#495aa4 100%)"></div>
<div class="nd" style="left:332px;top:857px;width:29px;height:7px;background:linear-gradient(180deg,#98b0d8 0%,#98b0d8 55%,#7c90b1 100%)"></div>
<div class="nd" style="left:332px;top:868px;width:29px;height:9px;background:linear-gradient(180deg,#d0d0ce 0%,#d0d0ce 55%,#aaaaa8 100%)"></div>
<div class="nd" style="left:332px;top:881px;width:29px;height:9px;background:linear-gradient(180deg,#c8895a 0%,#c8895a 55%,#a47049 100%)"></div>
<div class="nd" style="left:332px;top:895px;width:29px;height:7px;background:linear-gradient(180deg,#98b0d8 0%,#98b0d8 55%,#7c90b1 100%)"></div>
<div class="nd" style="left:377px;top:857px;width:29px;height:9px;background:linear-gradient(180deg,#6cc070 0%,#6cc070 55%,#589d5b 100%)"></div>
<div class="nd" style="left:603px;top:895px;width:29px;height:7px;background:linear-gradient(180deg,#5a6ec8 0%,#5a6ec8 55%,#495aa4 100%)"></div>
<div class="nd" style="left:603px;top:905px;width:29px;height:6px;background:linear-gradient(180deg,#b080b8 0%,#b080b8 55%,#906896 100%)"></div>
<div class="nd" style="left:603px;top:972px;width:29px;height:6px;background:linear-gradient(180deg,#b0b070 0%,#b0b070 55%,#90905b 100%)"></div>
<div class="nd" style="left:603px;top:986px;width:29px;height:6px;background:linear-gradient(180deg,#d8d8d6 0%,#d8d8d6 55%,#b1b1af 100%)"></div>
<div class="nd" style="left:603px;top:1000px;width:29px;height:9px;background:linear-gradient(180deg,#c8c020 0%,#c8c020 55%,#a49d1a 100%)"></div>
<div class="nd" style="left:603px;top:1019px;width:29px;height:6px;background:linear-gradient(180deg,#d8d8d6 0%,#d8d8d6 55%,#b1b1af 100%)"></div>
<div class="nd" style="left:650px;top:1041px;width:28px;height:6px;background:linear-gradient(180deg,#d0d0ce 0%,#d0d0ce 55%,#aaaaa8 100%)"></div>

<!-- divider -->
<div class="a" style="left:985px;top:0;width:1px;height:1058px;background:#222321"></div>

<!-- RIGHT PANE -->
<div class="a" style="left:986px;top:0;width:934px;height:1058px;background:#4a4b48"></div>
<!-- RIGHT TAB BAR -->
<div class="a" style="left:986px;top:0;width:934px;height:22px;background:#3e3f3d"></div>
<div class="a" style="left:990px;top:2px;width:16px;height:16px;background:linear-gradient(90deg,#9a9b98 0 55%,#6d6e6b 55% 100%)"></div>
<div class="a" style="left:1011px;top:3px;width:101px;height:19px;background:#393a38;border-radius:3px 3px 0 0"></div>
<div class="tx" style="left:1022px;top:6px;color:#cfcfcd">Properties</div>
<div class="a" style="left:1088px;top:5px;width:14px;height:14px;border-radius:7px;background:#444543"></div>
<div class="tx" style="left:1091px;top:5px;font-size:12px;color:#5f605d">✕</div>
<div class="a" style="left:1113px;top:3px;width:162px;height:19px;background:#393a38;border-radius:3px 3px 0 0"></div>
<div class="tx" style="left:1124px;top:6px;color:#cfcfcd">Background Renders</div>
<div class="a" style="left:1251px;top:5px;width:14px;height:14px;border-radius:7px;background:#444543"></div>
<div class="tx" style="left:1254px;top:5px;font-size:12px;color:#5f605d">✕</div>
<div class="a" style="left:1275px;top:1px;width:78px;height:21px;background:#4a4b48;border-radius:3px 3px 0 0"></div>
<div class="tx" style="left:1287px;top:6px;color:#e8a038">Profile</div>
<div class="tx" style="left:1333px;top:5px;font-size:12px;color:#8c8d8a">✕</div>

<!-- PROFILE SECTION -->
<div class="a" style="left:1001px;top:36px;width:0;height:0;border-left:4px solid transparent;border-right:4px solid transparent;border-top:8px solid #1e1f1d"></div>
<div class="tx" style="left:1016px;top:34px;font-size:11.2px;-webkit-text-stroke:0.45px #d0d0ce;color:#d0d0ce">PROFILE</div>
<div class="a" style="left:1071px;top:37px;width:839px;height:1px;background:#3d3e3c"></div>
<div class="a" style="left:1071px;top:38px;width:839px;height:1px;background:#565754"></div>
<div class="tx" style="left:911px;width:200px;text-align:right;top:66px;color:#c4c4c2">profile node</div><div class="dd" style="left:1123px;top:62px;width:77px;height:19px"></div><div class="tx" style="left:1127px;top:66px;color:#cfcfcd;">Profile1</div><div class="arr" style="left:1187px;top:69px;border-left-width:3.5px;border-right-width:3.5px;border-top-width:4px"></div><div class="tx" style="left:911px;width:200px;text-align:right;top:96px;color:#c4c4c2">import profile data</div><div class="fld" style="left:1123px;top:92px;width:670px;height:19px"></div><div class="tx" style="left:1126px;top:96px;color:#cfcfcd;">/temp/01/profileData_v0001.xml</div><svg class="a" style="left:1801px;top:94px" width="14" height="13" viewBox="0 0 14 13"><rect x="1" y="2" width="12" height="10" fill="#1a1b19" stroke="#6a6b68" stroke-width="0.8"/><path d="M1.5 2.5 H7 L8 4 H12.5" stroke="#d8d8d6" stroke-width="1.2" fill="none"/></svg><div class="btn" style="left:1828px;top:91px;width:73px;height:22px"></div><div class="tx" style="left:1828px;width:73px;text-align:center;top:96px;color:#d4d4d2">reload</div><div class="tx" style="left:911px;width:200px;text-align:right;top:127px;color:#c4c4c2">frame range</div><div class="fld" style="left:1123px;top:123px;width:125px;height:19px"></div><div class="tx" style="left:1126px;top:127px;color:#cfcfcd;">1001-1070</div><div class="tx" style="left:911px;width:200px;text-align:right;top:153px;color:#c4c4c2">data type</div><div class="cb" style="left:1123px;top:152px"></div><svg class="a" style="left:1123px;top:152px" width="12" height="12" viewBox="0 0 12 12"><path d="M2.5 2.5 L9.5 9.5 M9.5 2.5 L2.5 9.5" stroke="#dcdcda" stroke-width="2.6"/></svg><div class="tx" style="left:1140px;top:153px;color:#cfcfcd;">all</div><div class="cb" style="left:1168px;top:152px"></div><svg class="a" style="left:1168px;top:152px" width="12" height="12" viewBox="0 0 12 12"><path d="M2.5 2.5 L9.5 9.5 M9.5 2.5 L2.5 9.5" stroke="#dcdcda" stroke-width="2.6"/></svg><div class="tx" style="left:1185px;top:153px;color:#cfcfcd;">CPU</div><div class="cb" style="left:1223px;top:152px"></div><svg class="a" style="left:1223px;top:152px" width="12" height="12" viewBox="0 0 12 12"><path d="M2.5 2.5 L9.5 9.5 M9.5 2.5 L2.5 9.5" stroke="#dcdcda" stroke-width="2.6"/></svg><div class="tx" style="left:1240px;top:153px;color:#cfcfcd;">ops</div><div class="cb" style="left:1275px;top:152px"></div><svg class="a" style="left:1275px;top:152px" width="12" height="12" viewBox="0 0 12 12"><path d="M2.5 2.5 L9.5 9.5 M9.5 2.5 L2.5 9.5" stroke="#dcdcda" stroke-width="2.6"/></svg><div class="tx" style="left:1292px;top:153px;color:#cfcfcd;">memory</div><div class="btn" style="left:1123px;top:177px;width:73px;height:21px;background:#525350"></div><div class="tx" style="left:1123px;width:73px;text-align:center;top:181px;color:#8a8b88">profile</div><div class="tx" style="left:911px;width:200px;text-align:right;top:214px;color:#c4c4c2">export profile data</div><div class="fld" style="left:1123px;top:210px;width:670px;height:20px"></div><div class="tx" style="left:1126px;top:214px;color:#cfcfcd;">/temp/01/profileData_v0003.xml</div><svg class="a" style="left:1801px;top:212px" width="14" height="13" viewBox="0 0 14 13"><rect x="1" y="2" width="12" height="10" fill="#1a1b19" stroke="#6a6b68" stroke-width="0.8"/><path d="M1.5 2.5 H7 L8 4 H12.5" stroke="#d8d8d6" stroke-width="1.2" fill="none"/></svg><div class="btn" style="left:1828px;top:209px;width:73px;height:22px"></div><div class="tx" style="left:1828px;width:73px;text-align:center;top:214px;color:#d4d4d2">export</div>
<!-- FILTER -->
<div class="a" style="left:1001px;top:250px;width:0;height:0;border-left:4px solid transparent;border-right:4px solid transparent;border-top:8px solid #1e1f1d"></div>
<div class="tx" style="left:1016px;top:249px;font-size:11.2px;-webkit-text-stroke:0.45px #d0d0ce;color:#d0d0ce">FILTER</div>
<div class="a" style="left:1063px;top:252px;width:847px;height:1px;background:#3d3e3c"></div>
<div class="a" style="left:1063px;top:253px;width:847px;height:1px;background:#565754"></div>
<div class="tx" style="left:915px;width:200px;text-align:right;top:281px;color:#c4c4c2">minimum threshold</div><div class="fld" style="left:1126px;top:277px;width:73px;height:19px"></div><div class="tx" style="left:1131px;top:281px;color:#7c7d7a;">0</div><svg class="a" style="left:1205px;top:276px" width="360" height="22" viewBox="0 0 360 22"><rect x="3" y="9" width="345" height="2" fill="#333432"/><rect x="5.0" y="4" width="1" height="5" fill="#3a3b39"/><text x="5.0" y="20" font-size="7" fill="#5c5d5a" text-anchor="middle" font-family="Liberation Sans">0</text><rect x="39.3" y="6" width="1" height="3" fill="#3a3b39"/><text x="39.3" y="20" font-size="7" fill="#5c5d5a" text-anchor="middle" font-family="Liberation Sans">10</text><rect x="73.6" y="6" width="1" height="3" fill="#3a3b39"/><text x="73.6" y="20" font-size="7" fill="#5c5d5a" text-anchor="middle" font-family="Liberation Sans">20</text><rect x="107.9" y="6" width="1" height="3" fill="#3a3b39"/><text x="107.9" y="20" font-size="7" fill="#5c5d5a" text-anchor="middle" font-family="Liberation Sans">30</text><rect x="142.2" y="6" width="1" height="3" fill="#3a3b39"/><text x="142.2" y="20" font-size="7" fill="#5c5d5a" text-anchor="middle" font-family="Liberation Sans">40</text><rect x="176.5" y="6" width="1" height="3" fill="#3a3b39"/><text x="176.5" y="20" font-size="7" fill="#5c5d5a" text-anchor="middle" font-family="Liberation Sans">50</text><rect x="210.8" y="6" width="1" height="3" fill="#3a3b39"/><text x="210.8" y="20" font-size="7" fill="#5c5d5a" text-anchor="middle" font-family="Liberation Sans">60</text><rect x="245.1" y="6" width="1" height="3" fill="#3a3b39"/><text x="245.1" y="20" font-size="7" fill="#5c5d5a" text-anchor="middle" font-family="Liberation Sans">70</text><rect x="279.4" y="6" width="1" height="3" fill="#3a3b39"/><text x="279.4" y="20" font-size="7" fill="#5c5d5a" text-anchor="middle" font-family="Liberation Sans">80</text><rect x="313.7" y="6" width="1" height="3" fill="#3a3b39"/><text x="313.7" y="20" font-size="7" fill="#5c5d5a" text-anchor="middle" font-family="Liberation Sans">90</text><rect x="348.0" y="4" width="1" height="5" fill="#3a3b39"/><text x="348.0" y="20" font-size="7" fill="#5c5d5a" text-anchor="middle" font-family="Liberation Sans">100</text><rect x="3" y="4" width="4" height="9" fill="#6a6b68" stroke="#3a3b39" stroke-width="0.6"/></svg><div class="tx" style="left:915px;width:200px;text-align:right;top:307px;color:#c4c4c2">display data</div><div class="cb" style="left:1127px;top:306px"></div><svg class="a" style="left:1127px;top:306px" width="12" height="12" viewBox="0 0 12 12"><path d="M2.5 2.5 L9.5 9.5 M9.5 2.5 L2.5 9.5" stroke="#dcdcda" stroke-width="2.6"/></svg><div class="tx" style="left:1143px;top:307px;color:#cfcfcd;">all</div><div class="cb" style="left:1172px;top:306px"></div><svg class="a" style="left:1172px;top:306px" width="12" height="12" viewBox="0 0 12 12"><path d="M2.5 2.5 L9.5 9.5 M9.5 2.5 L2.5 9.5" stroke="#dcdcda" stroke-width="2.6"/></svg><div class="tx" style="left:1189px;top:307px;color:#cfcfcd;">CPU</div><div class="cb" style="left:1227px;top:306px"></div><svg class="a" style="left:1227px;top:306px" width="12" height="12" viewBox="0 0 12 12"><path d="M2.5 2.5 L9.5 9.5 M9.5 2.5 L2.5 9.5" stroke="#dcdcda" stroke-width="2.6"/></svg><div class="tx" style="left:1244px;top:307px;color:#cfcfcd;">wall</div><div class="cb" style="left:1281px;top:306px"></div><svg class="a" style="left:1281px;top:306px" width="12" height="12" viewBox="0 0 12 12"><path d="M2.5 2.5 L9.5 9.5 M9.5 2.5 L2.5 9.5" stroke="#dcdcda" stroke-width="2.6"/></svg><div class="tx" style="left:1297px;top:307px;color:#cfcfcd;">ops</div><div class="cb" style="left:1333px;top:306px"></div><svg class="a" style="left:1333px;top:306px" width="12" height="12" viewBox="0 0 12 12"><path d="M2.5 2.5 L9.5 9.5 M9.5 2.5 L2.5 9.5" stroke="#dcdcda" stroke-width="2.6"/></svg><div class="tx" style="left:1350px;top:307px;color:#cfcfcd;">memory</div><div class="tx" style="left:915px;width:200px;text-align:right;top:331px;color:#c4c4c2">display nodes</div><div class="a" style="left:1127px;top:332px;width:9px;height:9px;border-radius:5px;background:#d0d0ce"></div><div class="tx" style="left:1143px;top:331px;color:#cfcfcd;">all</div><div class="a" style="left:1172px;top:331px;width:11px;height:11px;border-radius:6px;background:#464744;border:1px solid #3e3f3d"></div><div class="tx" style="left:1189px;top:331px;color:#cfcfcd;">list</div><div class="fld" style="left:1126px;top:357px;width:598px;height:19px"></div><div class="btn" style="left:1735px;top:356px;width:74px;height:22px"></div><div class="tx" style="left:1735px;width:74px;text-align:center;top:361px;color:#d4d4d2">select</div><div class="btn" style="left:1820px;top:356px;width:81px;height:22px"></div><div class="tx" style="left:1820px;width:81px;text-align:center;top:361px;color:#d4d4d2">add selected</div><div class="dd" style="left:1126px;top:389px;width:110px;height:18px"></div><div class="tx" style="left:1131px;top:392px;color:#cfcfcd;">by node class</div><div class="arr" style="left:1223px;top:395px;border-left-width:3.5px;border-right-width:3.5px;border-top-width:4px"></div><div class="tx" style="left:915px;width:200px;text-align:right;top:421px;color:#c4c4c2">display frames</div><div class="fld" style="left:1126px;top:417px;width:126px;height:19px"></div><div class="tx" style="left:1129px;top:421px;color:#cfcfcd;">1001-1070</div><div class="dd" style="left:1261px;top:417px;width:84px;height:19px"></div><div class="tx" style="left:1264px;top:421px;color:#cfcfcd;">average</div><div class="arr" style="left:1333px;top:424px;border-left-width:3.5px;border-right-width:3.5px;border-top-width:4px"></div><div class="tx" style="left:1353px;top:421px;color:#c4c4c2;">average step</div><div class="fld" style="left:1434px;top:417px;width:33px;height:19px"></div><div class="tx" style="left:1438px;top:421px;color:#7c7d7a;">1</div><div class="dd" style="left:1467px;top:417px;width:15px;height:19px;background:#4e4f4c"></div><div class="arr" style="left:1471px;top:424px;border-left-width:3px;border-right-width:3px;border-top-width:3.5px;border-top-color:#7c7d7a"></div><div class="fld" style="left:1490px;top:417px;width:126px;height:19px"></div><div class="tx" style="left:1493px;top:421px;color:#7c7d7a;">1001</div><div class="btn" style="left:1628px;top:417px;width:19px;height:19px;background:#525350"></div><svg class="a" style="left:1628px;top:417px" width="19" height="19" viewBox="0 0 19 19"><path d="M12 5 V14 L5 9.5Z" fill="#8a8b88"/><rect x="13" y="5" width="2" height="9" fill="#8a8b88"/></svg><div class="btn" style="left:1658px;top:417px;width:19px;height:19px;background:#525350"></div><svg class="a" style="left:1658px;top:417px" width="19" height="19" viewBox="0 0 19 19"><rect x="4" y="5" width="2" height="9" fill="#8a8b88"/><path d="M7 5 V14 L14 9.5Z" fill="#8a8b88"/></svg><div class="tx" style="left:915px;width:200px;text-align:right;top:450px;color:#c4c4c2">chart type</div>
<!-- DATA -->
<div class="tx" style="left:997px;top:483px;font-size:11.2px;-webkit-text-stroke:0.45px #d0d0ce;color:#d0d0ce">DATA</div>
<div class="a" style="left:1035px;top:486px;width:875px;height:1px;background:#3d3e3c"></div>
<div class="a" style="left:1035px;top:487px;width:875px;height:1px;background:#565754"></div>
<div class="a" style="left:998px;top:503px;width:912px;height:517px;border:1px solid #2e2f2d;border-right-color:#3a3b39;border-bottom-color:#3a3b39;background:#4a4b48"></div>


<!-- CHART START -->
<svg class="a" style="left:0;top:0" width="1920" height="1058" viewBox="0 0 1920 1058"><rect x="1053.5" y="988.0" width="275.5" height="1.3" fill="#5e5f5c"/><rect x="1049.5" y="988.1" width="4" height="1" fill="#626360"/><rect x="1053.5" y="974.9" width="275.5" height="1" fill="#4f504d"/><rect x="1050.5" y="974.9" width="3" height="1" fill="#5a5b58"/><rect x="1053.5" y="961.7" width="275.5" height="1" fill="#4f504d"/><rect x="1050.5" y="961.7" width="3" height="1" fill="#5a5b58"/><rect x="1053.5" y="948.6" width="275.5" height="1" fill="#4f504d"/><rect x="1050.5" y="948.6" width="3" height="1" fill="#5a5b58"/><rect x="1053.5" y="935.4" width="275.5" height="1" fill="#4f504d"/><rect x="1050.5" y="935.4" width="3" height="1" fill="#5a5b58"/><rect x="1053.5" y="922.1" width="275.5" height="1.3" fill="#5e5f5c"/><rect x="1049.5" y="922.2" width="4" height="1" fill="#626360"/><rect x="1053.5" y="909.0" width="275.5" height="1" fill="#4f504d"/><rect x="1050.5" y="909.0" width="3" height="1" fill="#5a5b58"/><rect x="1053.5" y="895.8" width="275.5" height="1" fill="#4f504d"/><rect x="1050.5" y="895.8" width="3" height="1" fill="#5a5b58"/><rect x="1053.5" y="882.7" width="275.5" height="1" fill="#4f504d"/><rect x="1050.5" y="882.7" width="3" height="1" fill="#5a5b58"/><rect x="1053.5" y="869.5" width="275.5" height="1" fill="#4f504d"/><rect x="1050.5" y="869.5" width="3" height="1" fill="#5a5b58"/><rect x="1053.5" y="856.2" width="275.5" height="1.3" fill="#5e5f5c"/><rect x="1049.5" y="856.3" width="4" height="1" fill="#626360"/><rect x="1053.5" y="843.1" width="275.5" height="1" fill="#4f504d"/><rect x="1050.5" y="843.1" width="3" height="1" fill="#5a5b58"/><rect x="1053.5" y="829.9" width="275.5" height="1" fill="#4f504d"/><rect x="1050.5" y="829.9" width="3" height="1" fill="#5a5b58"/><rect x="1053.5" y="816.8" width="275.5" height="1" fill="#4f504d"/><rect x="1050.5" y="816.8" width="3" height="1" fill="#5a5b58"/><rect x="1053.5" y="803.6" width="275.5" height="1" fill="#4f504d"/><rect x="1050.5" y="803.6" width="3" height="1" fill="#5a5b58"/><rect x="1053.5" y="790.3" width="275.5" height="1.3" fill="#5e5f5c"/><rect x="1049.5" y="790.4" width="4" height="1" fill="#626360"/><rect x="1053.5" y="777.2" width="275.5" height="1" fill="#4f504d"/><rect x="1050.5" y="777.2" width="3" height="1" fill="#5a5b58"/><rect x="1053.5" y="764.0" width="275.5" height="1" fill="#4f504d"/><rect x="1050.5" y="764.0" width="3" height="1" fill="#5a5b58"/><rect x="1053.5" y="750.9" width="275.5" height="1" fill="#4f504d"/><rect x="1050.5" y="750.9" width="3" height="1" fill="#5a5b58"/><rect x="1053.5" y="737.7" width="275.5" height="1" fill="#4f504d"/><rect x="1050.5" y="737.7" width="3" height="1" fill="#5a5b58"/><rect x="1053.5" y="724.4" width="275.5" height="1.3" fill="#5e5f5c"/><rect x="1049.5" y="724.5" width="4" height="1" fill="#626360"/><rect x="1053.5" y="711.3" width="275.5" height="1" fill="#4f504d"/><rect x="1050.5" y="711.3" width="3" height="1" fill="#5a5b58"/><rect x="1053.5" y="698.1" width="275.5" height="1" fill="#4f504d"/><rect x="1050.5" y="698.1" width="3" height="1" fill="#5a5b58"/><rect x="1053.5" y="685.0" width="275.5" height="1" fill="#4f504d"/><rect x="1050.5" y="685.0" width="3" height="1" fill="#5a5b58"/><rect x="1053.5" y="671.8" width="275.5" height="1" fill="#4f504d"/><rect x="1050.5" y="671.8" width="3" height="1" fill="#5a5b58"/><rect x="1053.5" y="658.5" width="275.5" height="1.3" fill="#5e5f5c"/><rect x="1049.5" y="658.6" width="4" height="1" fill="#626360"/><rect x="1053.5" y="645.4" width="275.5" height="1" fill="#4f504d"/><rect x="1050.5" y="645.4" width="3" height="1" fill="#5a5b58"/><rect x="1053.5" y="632.2" width="275.5" height="1" fill="#4f504d"/><rect x="1050.5" y="632.2" width="3" height="1" fill="#5a5b58"/><rect x="1053.5" y="619.1" width="275.5" height="1" fill="#4f504d"/><rect x="1050.5" y="619.1" width="3" height="1" fill="#5a5b58"/><rect x="1053.5" y="605.9" width="275.5" height="1" fill="#4f504d"/><rect x="1050.5" y="605.9" width="3" height="1" fill="#5a5b58"/><rect x="1053.5" y="592.6" width="275.5" height="1.3" fill="#5e5f5c"/><rect x="1049.5" y="592.7" width="4" height="1" fill="#626360"/><rect x="1053.5" y="579.5" width="275.5" height="1" fill="#4f504d"/><rect x="1050.5" y="579.5" width="3" height="1" fill="#5a5b58"/><rect x="1053.5" y="566.3" width="275.5" height="1" fill="#4f504d"/><rect x="1050.5" y="566.3" width="3" height="1" fill="#5a5b58"/><rect x="1053.5" y="553.2" width="275.5" height="1" fill="#4f504d"/><rect x="1050.5" y="553.2" width="3" height="1" fill="#5a5b58"/><rect x="1053.5" y="540.0" width="275.5" height="1" fill="#4f504d"/><rect x="1050.5" y="540.0" width="3" height="1" fill="#5a5b58"/><rect x="1053.5" y="526.7" width="275.5" height="1.3" fill="#5e5f5c"/><rect x="1049.5" y="526.8" width="4" height="1" fill="#626360"/><rect x="1053.0" y="525" width="1" height="469.6" fill="#5f605d"/><rect x="1053.5" y="988.1" width="275.5" height="1.5" fill="#626360"/><rect x="1328" y="986.6" width="1.2" height="9" fill="#262725"/><rect x="1062.3" y="567.5" width="12.4" height="421.1" fill="#c4c5c2" stroke="#222321" stroke-width="1"/><rect x="1078.6" y="578.0" width="12.4" height="410.6" fill="#c8895a" stroke="#222321" stroke-width="1"/><rect x="1095.0" y="698.9" width="12.4" height="289.7" fill="#a887a8" stroke="#222321" stroke-width="1"/><rect x="1111.3" y="874.1" width="12.4" height="114.5" fill="#c8c8c6" stroke="#222321" stroke-width="1"/><rect x="1127.7" y="970.0" width="12.4" height="18.6" fill="#cf8f5c" stroke="#222321" stroke-width="1"/><rect x="1144.0" y="971.9" width="12.4" height="16.7" fill="#5b6fc2" stroke="#222321" stroke-width="1"/><rect x="1160.4" y="976.9" width="12.4" height="11.7" fill="#8db4ea" stroke="#222321" stroke-width="1"/><rect x="1176.8" y="980.7" width="12.4" height="7.9" fill="#79c27a" stroke="#222321" stroke-width="1"/><rect x="1193.1" y="981.6" width="12.4" height="7.0" fill="#d0d0ce" stroke="#222321" stroke-width="1"/><rect x="1209.5" y="983.6" width="12.4" height="5.0" fill="#b05282" stroke="#222321" stroke-width="1"/><rect x="1225.8" y="985.0" width="12.4" height="3.6" fill="#22d622" stroke="#222321" stroke-width="1"/><rect x="1242.2" y="985.2" width="12.4" height="3.4" fill="#d8d8d6" stroke="#222321" stroke-width="1"/><rect x="1258.5" y="986.1" width="12.4" height="2.5" fill="#b0a458" stroke="#222321" stroke-width="1"/><rect x="1274.8" y="986.5" width="12.4" height="2.1" fill="#a4a044" stroke="#222321" stroke-width="1"/><rect x="1291.2" y="986.9" width="12.4" height="1.7" fill="#7a6c9a" stroke="#222321" stroke-width="1"/><rect x="1307.5" y="986.8" width="12.4" height="1.8" fill="#a0a09e" stroke="#222321" stroke-width="1"/><rect x="1547.5" y="988.0" width="275.5" height="1.3" fill="#5e5f5c"/><rect x="1543.5" y="988.1" width="4" height="1" fill="#626360"/><rect x="1547.5" y="974.9" width="275.5" height="1" fill="#4f504d"/><rect x="1544.5" y="974.9" width="3" height="1" fill="#5a5b58"/><rect x="1547.5" y="961.7" width="275.5" height="1" fill="#4f504d"/><rect x="1544.5" y="961.7" width="3" height="1" fill="#5a5b58"/><rect x="1547.5" y="948.6" width="275.5" height="1" fill="#4f504d"/><rect x="1544.5" y="948.6" width="3" height="1" fill="#5a5b58"/><rect x="1547.5" y="935.4" width="275.5" height="1" fill="#4f504d"/><rect x="1544.5" y="935.4" width="3" height="1" fill="#5a5b58"/><rect x="1547.5" y="922.1" width="275.5" height="1.3" fill="#5e5f5c"/><rect x="1543.5" y="922.2" width="4" height="1" fill="#626360"/><rect x="1547.5" y="909.0" width="275.5" height="1" fill="#4f504d"/><rect x="1544.5" y="909.0" width="3" height="1" fill="#5a5b58"/><rect x="1547.5" y="895.8" width="275.5" height="1" fill="#4f504d"/><rect x="1544.5" y="895.8" width="3" height="1" fill="#5a5b58"/><rect x="1547.5" y="882.7" width="275.5" height="1" fill="#4f504d"/><rect x="1544.5" y="882.7" width="3" height="1" fill="#5a5b58"/><rect x="1547.5" y="869.5" width="275.5" height="1" fill="#4f504d"/><rect x="1544.5" y="869.5" width="3" height="1" fill="#5a5b58"/><rect x="1547.5" y="856.2" width="275.5" height="1.3" fill="#5e5f5c"/><rect x="1543.5" y="856.3" width="4" height="1" fill="#626360"/><rect x="1547.5" y="843.1" width="275.5" height="1" fill="#4f504d"/><rect x="1544.5" y="843.1" width="3" height="1" fill="#5a5b58"/><rect x="1547.5" y="829.9" width="275.5" height="1" fill="#4f504d"/><rect x="1544.5" y="829.9" width="3" height="1" fill="#5a5b58"/><rect x="1547.5" y="816.8" width="275.5" height="1" fill="#4f504d"/><rect x="1544.5" y="816.8" width="3" height="1" fill="#5a5b58"/><rect x="1547.5" y="803.6" width="275.5" height="1" fill="#4f504d"/><rect x="1544.5" y="803.6" width="3" height="1" fill="#5a5b58"/><rect x="1547.5" y="790.3" width="275.5" height="1.3" fill="#5e5f5c"/><rect x="1543.5" y="790.4" width="4" height="1" fill="#626360"/><rect x="1547.5" y="777.2" width="275.5" height="1" fill="#4f504d"/><rect x="1544.5" y="777.2" width="3" height="1" fill="#5a5b58"/><rect x="1547.5" y="764.0" width="275.5" height="1" fill="#4f504d"/><rect x="1544.5" y="764.0" width="3" height="1" fill="#5a5b58"/><rect x="1547.5" y="750.9" width="275.5" height="1" fill="#4f504d"/><rect x="1544.5" y="750.9" width="3" height="1" fill="#5a5b58"/><rect x="1547.5" y="737.7" width="275.5" height="1" fill="#4f504d"/><rect x="1544.5" y="737.7" width="3" height="1" fill="#5a5b58"/><rect x="1547.5" y="724.4" width="275.5" height="1.3" fill="#5e5f5c"/><rect x="1543.5" y="724.5" width="4" height="1" fill="#626360"/><rect x="1547.5" y="711.3" width="275.5" height="1" fill="#4f504d"/><rect x="1544.5" y="711.3" width="3" height="1" fill="#5a5b58"/><rect x="1547.5" y="698.1" width="275.5" height="1" fill="#4f504d"/><rect x="1544.5" y="698.1" width="3" height="1" fill="#5a5b58"/><rect x="1547.5" y="685.0" width="275.5" height="1" fill="#4f504d"/><rect x="1544.5" y="685.0" width="3" height="1" fill="#5a5b58"/><rect x="1547.5" y="671.8" width="275.5" height="1" fill="#4f504d"/><rect x="1544.5" y="671.8" width="3" height="1" fill="#5a5b58"/><rect x="1547.5" y="658.5" width="275.5" height="1.3" fill="#5e5f5c"/><rect x="1543.5" y="658.6" width="4" height="1" fill="#626360"/><rect x="1547.5" y="645.4" width="275.5" height="1" fill="#4f504d"/><rect x="1544.5" y="645.4" width="3" height="1" fill="#5a5b58"/><rect x="1547.5" y="632.2" width="275.5" height="1" fill="#4f504d"/><rect x="1544.5" y="632.2" width="3" height="1" fill="#5a5b58"/><rect x="1547.5" y="619.1" width="275.5" height="1" fill="#4f504d"/><rect x="1544.5" y="619.1" width="3" height="1" fill="#5a5b58"/><rect x="1547.5" y="605.9" width="275.5" height="1" fill="#4f504d"/><rect x="1544.5" y="605.9" width="3" height="1" fill="#5a5b58"/><rect x="1547.5" y="592.6" width="275.5" height="1.3" fill="#5e5f5c"/><rect x="1543.5" y="592.7" width="4" height="1" fill="#626360"/><rect x="1547.5" y="579.5" width="275.5" height="1" fill="#4f504d"/><rect x="1544.5" y="579.5" width="3" height="1" fill="#5a5b58"/><rect x="1547.5" y="566.3" width="275.5" height="1" fill="#4f504d"/><rect x="1544.5" y="566.3" width="3" height="1" fill="#5a5b58"/><rect x="1547.5" y="553.2" width="275.5" height="1" fill="#4f504d"/><rect x="1544.5" y="553.2" width="3" height="1" fill="#5a5b58"/><rect x="1547.5" y="540.0" width="275.5" height="1" fill="#4f504d"/><rect x="1544.5" y="540.0" width="3" height="1" fill="#5a5b58"/><rect x="1547.5" y="526.7" width="275.5" height="1.3" fill="#5e5f5c"/><rect x="1543.5" y="526.8" width="4" height="1" fill="#626360"/><rect x="1547.0" y="525" width="1" height="469.6" fill="#5f605d"/><rect x="1547.5" y="988.1" width="275.5" height="1.5" fill="#626360"/><rect x="1822" y="986.6" width="1.2" height="9" fill="#262725"/><rect x="1556.8" y="561.6" width="12.4" height="427.0" fill="#c4c5c2" stroke="#222321" stroke-width="1"/><rect x="1573.0" y="581.9" width="12.4" height="406.7" fill="#c8895a" stroke="#222321" stroke-width="1"/><rect x="1589.3" y="701.3" width="12.4" height="287.3" fill="#a887a8" stroke="#222321" stroke-width="1"/><rect x="1605.5" y="877.0" width="12.4" height="111.6" fill="#c8c8c6" stroke="#222321" stroke-width="1"/><rect x="1621.8" y="970.8" width="12.4" height="17.8" fill="#cf8f5c" stroke="#222321" stroke-width="1"/><rect x="1638.0" y="972.8" width="12.4" height="15.8" fill="#5b6fc2" stroke="#222321" stroke-width="1"/><rect x="1654.3" y="976.1" width="12.4" height="12.5" fill="#8db4ea" stroke="#222321" stroke-width="1"/><rect x="1670.5" y="980.7" width="12.4" height="7.9" fill="#79c27a" stroke="#222321" stroke-width="1"/><rect x="1686.8" y="982.0" width="12.4" height="6.6" fill="#d0d0ce" stroke="#222321" stroke-width="1"/><rect x="1703.0" y="983.3" width="12.4" height="5.3" fill="#b05282" stroke="#222321" stroke-width="1"/><rect x="1719.3" y="984.6" width="12.4" height="4.0" fill="#22d622" stroke="#222321" stroke-width="1"/><rect x="1735.5" y="985.3" width="12.4" height="3.3" fill="#d8d8d6" stroke="#222321" stroke-width="1"/><rect x="1751.8" y="986.0" width="12.4" height="2.6" fill="#b0a458" stroke="#222321" stroke-width="1"/><rect x="1768.0" y="986.2" width="12.4" height="2.4" fill="#a4a044" stroke="#222321" stroke-width="1"/><rect x="1784.3" y="986.6" width="12.4" height="2.0" fill="#7a6c9a" stroke="#222321" stroke-width="1"/><rect x="1800.5" y="986.8" width="12.4" height="1.8" fill="#a0a09e" stroke="#222321" stroke-width="1"/></svg>
<div class="tx" style="left:1047px;top:513px;font-size:12.5px;color:#cfcfcd">CPU</div><div class="tx" style="left:944.0px;width:100px;text-align:right;top:983.6px;font-size:12px;color:#c8c8c6">0%</div><div class="tx" style="left:944.0px;width:100px;text-align:right;top:917.7px;font-size:12px;color:#c8c8c6">5%</div><div class="tx" style="left:944.0px;width:100px;text-align:right;top:851.8px;font-size:12px;color:#c8c8c6">10%</div><div class="tx" style="left:944.0px;width:100px;text-align:right;top:785.9px;font-size:12px;color:#c8c8c6">15%</div><div class="tx" style="left:944.0px;width:100px;text-align:right;top:720.0px;font-size:12px;color:#c8c8c6">20%</div><div class="tx" style="left:944.0px;width:100px;text-align:right;top:654.1px;font-size:12px;color:#c8c8c6">25%</div><div class="tx" style="left:944.0px;width:100px;text-align:right;top:588.2px;font-size:12px;color:#c8c8c6">30%</div><div class="tx" style="left:944.0px;width:100px;text-align:right;top:522.3px;font-size:12px;color:#c8c8c6">35%</div><div class="tx" style="left:1541px;top:513px;font-size:12.5px;color:#b8c4d0">Wall</div><div class="tx" style="left:1438.0px;width:100px;text-align:right;top:983.6px;font-size:12px;color:#c8c8c6">0%</div><div class="tx" style="left:1438.0px;width:100px;text-align:right;top:917.7px;font-size:12px;color:#c8c8c6">5%</div><div class="tx" style="left:1438.0px;width:100px;text-align:right;top:851.8px;font-size:12px;color:#c8c8c6">10%</div><div class="tx" style="left:1438.0px;width:100px;text-align:right;top:785.9px;font-size:12px;color:#c8c8c6">15%</div><div class="tx" style="left:1438.0px;width:100px;text-align:right;top:720.0px;font-size:12px;color:#c8c8c6">20%</div><div class="tx" style="left:1438.0px;width:100px;text-align:right;top:654.1px;font-size:12px;color:#c8c8c6">25%</div><div class="tx" style="left:1438.0px;width:100px;text-align:right;top:588.2px;font-size:12px;color:#c8c8c6">30%</div><div class="tx" style="left:1438.0px;width:100px;text-align:right;top:522.3px;font-size:12px;color:#c8c8c6">35%</div>
<div class="tx" style="left:1341px;top:517px;font-size:11.5px;font-weight:bold;color:#d8d8d6">CPU</div><div class="tx" style="left:1341px;top:528.6px;font-size:12.5px;color:#d0d0ce">Glint</div><div class="tx" style="left:1439px;top:528.6px;font-size:12.5px;color:#d0d0ce">31.95%</div><div class="tx" style="left:1341px;top:541.6px;font-size:12.5px;color:#d0d0ce">VectorBlur2</div><div class="tx" style="left:1439px;top:541.6px;font-size:12.5px;color:#d0d0ce">31.15%</div><div class="tx" style="left:1341px;top:554.5px;font-size:12.5px;color:#d0d0ce">VectorDistort</div><div class="tx" style="left:1439px;top:554.5px;font-size:12.5px;color:#d0d0ce">21.98%</div><div class="tx" style="left:1341px;top:567.5px;font-size:12.5px;color:#d0d0ce">Read</div><div class="tx" style="left:1439px;top:567.5px;font-size:12.5px;color:#d0d0ce">8.69%</div><div class="tx" style="left:1341px;top:580.4px;font-size:12.5px;color:#d0d0ce">Blur</div><div class="tx" style="left:1439px;top:580.4px;font-size:12.5px;color:#d0d0ce">1.41%</div><div class="tx" style="left:1341px;top:593.4px;font-size:12.5px;color:#d0d0ce">Merge2</div><div class="tx" style="left:1439px;top:593.4px;font-size:12.5px;color:#d0d0ce">1.27%</div><div class="tx" style="left:1341px;top:606.3px;font-size:12.5px;color:#d0d0ce">ColorCorrect</div><div class="tx" style="left:1439px;top:606.3px;font-size:12.5px;color:#d0d0ce">0.89%</div><div class="tx" style="left:1341px;top:619.2px;font-size:12.5px;color:#d0d0ce">Roto</div><div class="tx" style="left:1439px;top:619.2px;font-size:12.5px;color:#d0d0ce">0.60%</div><div class="tx" style="left:1341px;top:632.2px;font-size:12.5px;color:#d0d0ce">VectorToMotion</div><div class="tx" style="left:1439px;top:632.2px;font-size:12.5px;color:#d0d0ce">0.53%</div><div class="tx" style="left:1341px;top:645.1px;font-size:12.5px;color:#d0d0ce">ShuffleCopy</div><div class="tx" style="left:1439px;top:645.1px;font-size:12.5px;color:#d0d0ce">0.38%</div><div class="tx" style="left:1341px;top:658.1px;font-size:12.5px;color:#d0d0ce">Keyer</div><div class="tx" style="left:1439px;top:658.1px;font-size:12.5px;color:#d0d0ce">0.27%</div><div class="tx" style="left:1341px;top:671.1px;font-size:12.5px;color:#d0d0ce">ModifyMetaData</div><div class="tx" style="left:1439px;top:671.1px;font-size:12.5px;color:#d0d0ce">0.26%</div><div class="tx" style="left:1341px;top:684.0px;font-size:12.5px;color:#d0d0ce">TimeClip</div><div class="tx" style="left:1439px;top:684.0px;font-size:12.5px;color:#d0d0ce">0.19%</div><div class="tx" style="left:1341px;top:697.0px;font-size:12.5px;color:#d0d0ce">Write</div><div class="tx" style="left:1439px;top:697.0px;font-size:12.5px;color:#d0d0ce">0.16%</div><div class="tx" style="left:1341px;top:709.9px;font-size:12.5px;color:#d0d0ce">Crop</div><div class="tx" style="left:1439px;top:709.9px;font-size:12.5px;color:#d0d0ce">0.13%</div><div class="tx" style="left:1341px;top:722.9px;font-size:12.5px;color:#d0d0ce">other</div><div class="tx" style="left:1439px;top:722.9px;font-size:12.5px;color:#d0d0ce">0.14%</div>
<div class="a" style="left:1835px;top:505px;width:58px;height:240px;overflow:hidden"><div class="tx" style="left:0;top:12px;font-size:11.5px;font-weight:bold;color:#d8d8d6">Wall</div><div class="tx" style="left:0;top:23.6px;font-size:12.5px;color:#d0d0ce">Glint</div><div class="tx" style="left:0;top:36.6px;font-size:12.5px;color:#d0d0ce">VectorBlur2</div><div class="tx" style="left:0;top:49.5px;font-size:12.5px;color:#d0d0ce">VectorDistort</div><div class="tx" style="left:0;top:62.5px;font-size:12.5px;color:#d0d0ce">Read</div><div class="tx" style="left:0;top:75.4px;font-size:12.5px;color:#d0d0ce">Blur</div><div class="tx" style="left:0;top:88.4px;font-size:12.5px;color:#d0d0ce">Merge2</div><div class="tx" style="left:0;top:101.3px;font-size:12.5px;color:#d0d0ce">ColorCorrect</div><div class="tx" style="left:0;top:114.2px;font-size:12.5px;color:#d0d0ce">Roto</div><div class="tx" style="left:0;top:127.2px;font-size:12.5px;color:#d0d0ce">VectorToMotion</div><div class="tx" style="left:0;top:140.1px;font-size:12.5px;color:#d0d0ce">ShuffleCopy</div><div class="tx" style="left:0;top:153.1px;font-size:12.5px;color:#d0d0ce">Keyer</div><div class="tx" style="left:0;top:166.1px;font-size:12.5px;color:#d0d0ce">ModifyMetaData</div><div class="tx" style="left:0;top:179.0px;font-size:12.5px;color:#d0d0ce">TimeClip</div><div class="tx" style="left:0;top:192.0px;font-size:12.5px;color:#d0d0ce">Write</div><div class="tx" style="left:0;top:204.9px;font-size:12.5px;color:#d0d0ce">Crop</div><div class="tx" style="left:0;top:217.9px;font-size:12.5px;color:#d0d0ce">other</div></div>
<!-- CHART END -->
<!-- v scrollbar -->
<div class="a" style="left:1893px;top:504px;width:16px;height:500px;background:#474845"></div>
<div class="btn" style="left:1894px;top:505px;width:14px;height:14px;background:#4e4f4c"></div>
<div class="a" style="left:1897px;top:509px;width:0;height:0;border-left:4px solid transparent;border-right:4px solid transparent;border-bottom:5px solid #d8d8d6"></div>
<div class="a" style="left:1894px;top:521px;width:14px;height:449px;border:1px solid #3c3d3b;background:#484946"></div>
<div class="btn" style="left:1894px;top:971px;width:14px;height:14px;background:#4e4f4c"></div>
<div class="a" style="left:1897px;top:975px;width:0;height:0;border-left:4px solid transparent;border-right:4px solid transparent;border-bottom:5px solid #d8d8d6"></div>
<div class="btn" style="left:1894px;top:987px;width:14px;height:14px;background:#4e4f4c"></div>
<div class="a" style="left:1897px;top:992px;width:0;height:0;border-left:4px solid transparent;border-right:4px solid transparent;border-top:5px solid #d8d8d6"></div>
<!-- h scrollbar -->
<div class="a" style="left:999px;top:1002px;width:894px;height:17px;background:#474845;border-top:1px solid #3c3d3b"></div>
<div class="btn" style="left:1000px;top:1004px;width:14px;height:14px;background:#555653"></div>
<div class="a" style="left:1004px;top:1007px;width:0;height:0;border-top:4px solid transparent;border-bottom:4px solid transparent;border-right:5px solid #d8d8d6"></div>
<div class="a" style="left:1015px;top:1004px;width:381px;height:14px;background:linear-gradient(180deg,#5e5f5c,#555653);border-radius:2px;border:1px solid #3d3e3c"></div>
<svg class="a" style="left:1196px;top:1006px" width="20" height="10" viewBox="0 0 20 10"><g fill="#3a3b39"><rect x="1" y="1" width="1" height="1"/><rect x="5" y="1" width="1" height="1"/><rect x="9" y="1" width="1" height="1"/><rect x="13" y="1" width="1" height="1"/><rect x="17" y="1" width="1" height="1"/><rect x="1" y="4.5" width="1" height="1"/><rect x="5" y="4.5" width="1" height="1"/><rect x="9" y="4.5" width="1" height="1"/><rect x="13" y="4.5" width="1" height="1"/><rect x="17" y="4.5" width="1" height="1"/><rect x="1" y="8" width="1" height="1"/><rect x="5" y="8" width="1" height="1"/><rect x="9" y="8" width="1" height="1"/><rect x="13" y="8" width="1" height="1"/><rect x="17" y="8" width="1" height="1"/></g></svg>
<div class="btn" style="left:1862px;top:1004px;width:14px;height:14px;background:#555653"></div>
<div class="a" style="left:1866px;top:1007px;width:0;height:0;border-top:4px solid transparent;border-bottom:4px solid transparent;border-right:5px solid #d8d8d6"></div>
<div class="btn" style="left:1877px;top:1004px;width:14px;height:14px;background:#555653"></div>
<div class="a" style="left:1882px;top:1007px;width:0;height:0;border-top:4px solid transparent;border-bottom:4px solid transparent;border-left:5px solid #d8d8d6"></div>
<!-- +/- -->
<div class="btn" style="left:998px;top:1031px;width:18px;height:17px;background:#555653"></div>
<div class="tx" style="left:998px;width:18px;text-align:center;top:1032px;font-size:16px;font-weight:bold;color:#b8b9b6">+</div>
<div class="btn" style="left:1028px;top:1031px;width:18px;height:17px;background:#555653"></div>
<div class="a" style="left:1032px;top:1038.5px;width:10px;height:2px;background:#b8b9b6"></div>

<!-- chart type popup -->
<div class="a" style="left:1127px;top:446px;width:73px;height:79px;background:#474846;border:1px solid #3a3b39;box-shadow:1px 2px 3px rgba(0,0,0,0.3)"></div>
<div class="a" style="left:1128px;top:447px;width:71px;height:20px;background:#e29c34"></div>
<div class="a" style="left:1135px;top:451px;width:12px;height:12px;background:#6a5a44;border:1px solid #5a4a34"></div>
<svg class="a" style="left:1135px;top:451px" width="12" height="12" viewBox="0 0 12 12"><path d="M2.5 2.5 L9.5 9.5 M9.5 2.5 L2.5 9.5" stroke="#e8e4dc" stroke-width="2.6"/></svg>
<div class="tx" style="left:1153px;top:451px;font-size:12.5px;color:#4a3414;-webkit-text-stroke:0">bar</div>
<div class="a" style="left:1135px;top:471px;width:12px;height:12px;background:#434442;border:1px solid #3c3d3b"></div>
<div class="tx" style="left:1153px;top:471px;font-size:12.5px;color:#c8c8c6">pie</div>
<div class="a" style="left:1135px;top:489px;width:12px;height:12px;background:#434442;border:1px solid #3c3d3b"></div>
<div class="tx" style="left:1153px;top:489px;font-size:12.5px;color:#c8c8c6">timeline</div>
<div class="a" style="left:1135px;top:508px;width:12px;height:12px;background:#434442;border:1px solid #3c3d3b"></div>
<div class="tx" style="left:1153px;top:508px;font-size:12.5px;color:#c8c8c6">table</div>
<svg class="a" style="left:1185px;top:445px" width="14" height="20" viewBox="0 0 14 20"><path d="M2 1 V15 L5.5 12 L8 17.5 L10 16.5 L7.8 11.2 L12 11Z" fill="#111" stroke="#eee" stroke-width="1"/></svg>

<!-- STATUS BAR -->
<div class="a" style="left:0;top:1058px;width:1920px;height:22px;background:#4a4b48"></div>


<!-- STATUS -->
<div class="tx" style="left:1398px;top:1064px;font-size:11.6px;color:#d0d0ce">Localization Mode: On  Memory: 1.7 GB (10.9%) CPU: 8.2% Disk: 0.0 MB/s Network: 0.0 MB/s</div>
<div class="a" style="left:1894px;top:1064px;width:26px;height:12px;background:#46ac46"></div>
<div class="tx" style="left:1900px;top:1065px;font-size:9px;color:#2e8a2e">OK</div>
</body></html>
